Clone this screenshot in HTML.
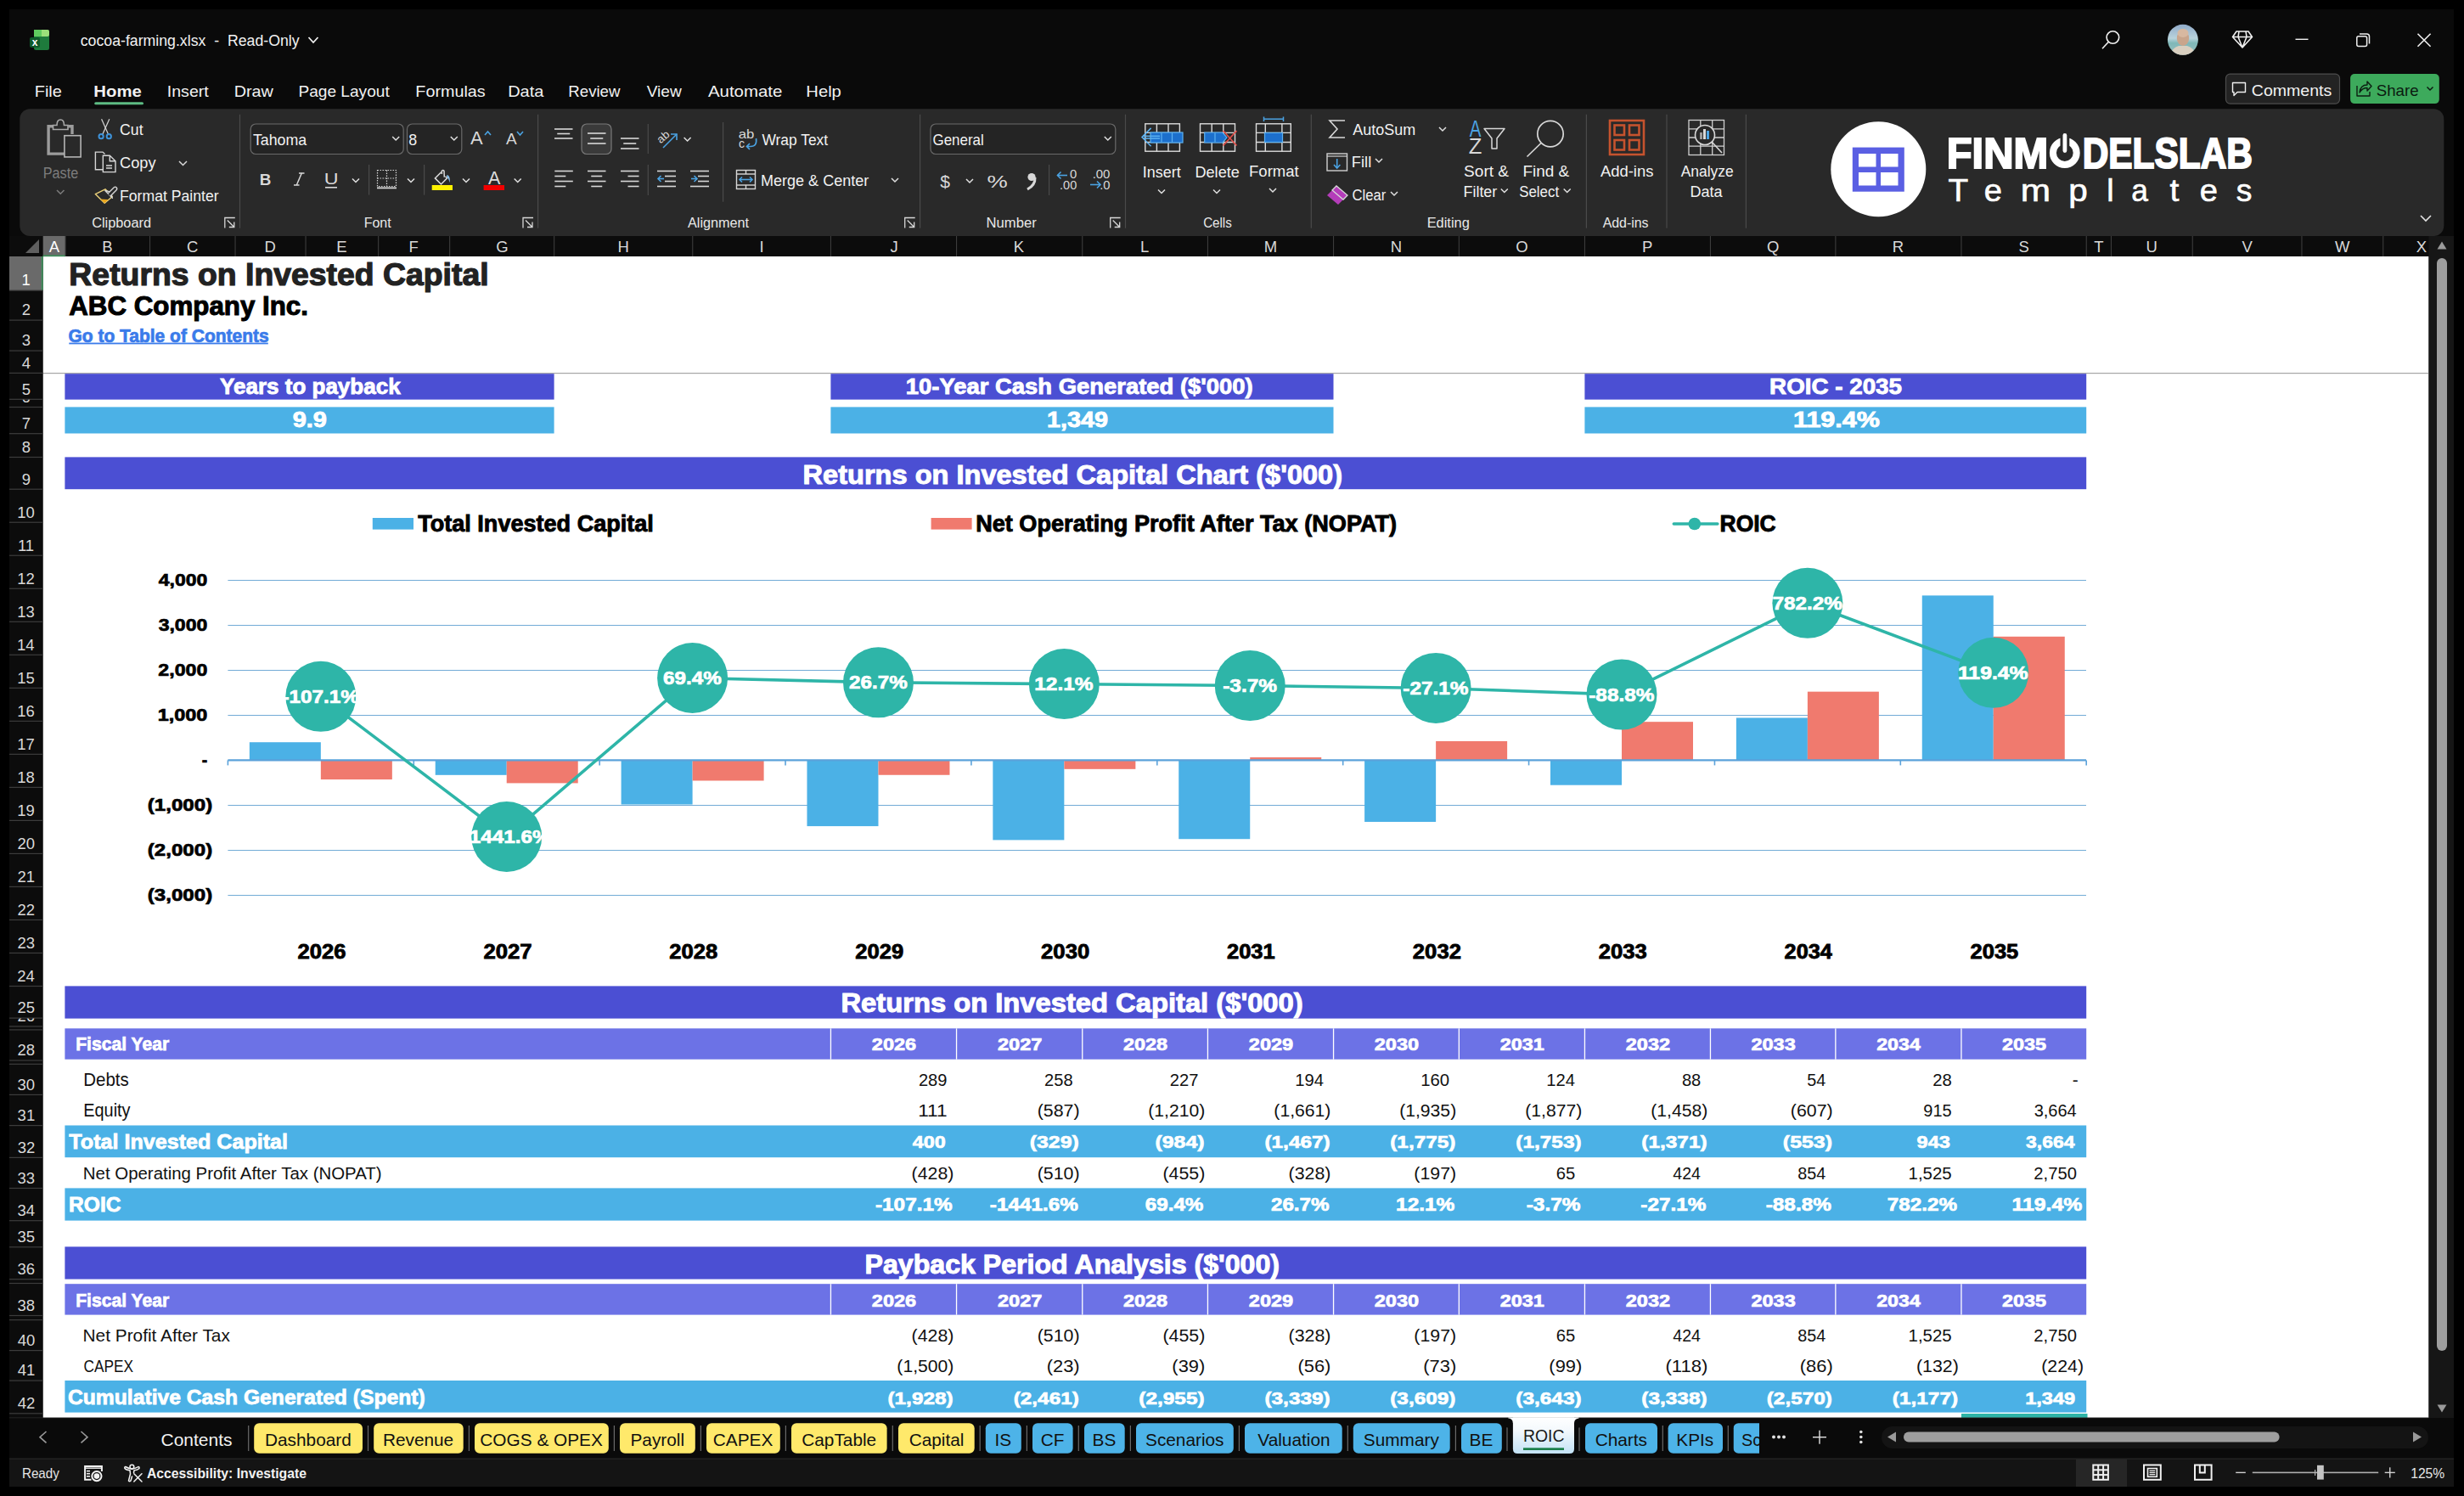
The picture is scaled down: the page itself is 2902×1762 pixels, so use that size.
<!DOCTYPE html>
<html><head><meta charset="utf-8"><title>cocoa-farming.xlsx</title>
<style>html,body{margin:0;padding:0;background:#000;overflow:hidden;width:2902px;height:1762px}svg{display:block}text{font-family:"Liberation Sans",sans-serif;white-space:pre}</style>
</head><body>
<svg width="2902" height="1762" viewBox="0 0 2902 1762" font-family="Liberation Sans">
<rect x="0.00" y="0.00" width="2902.00" height="1762.00" fill="#000"/>
<rect x="11.00" y="11.00" width="2879.00" height="1740.00" fill="#0A0A0A"/>
<rect x="50.50" y="302.00" width="2810.00" height="1368.00" fill="#fff"/>
<text x="81.38" y="335.80" font-size="36.5" font-weight="700" fill="#222222" textLength="494.24" lengthAdjust="spacingAndGlyphs" stroke="#222222" stroke-width="1.22">Returns on Invested Capital</text>
<text x="81.22" y="370.60" font-size="30.5" font-weight="700" fill="#000000" textLength="281.74" lengthAdjust="spacingAndGlyphs" stroke="#000000" stroke-width="1.02">ABC Company Inc.</text>
<text x="80.46" y="403.00" font-size="21.8" font-weight="700" fill="#3A7BEA" textLength="236.20" lengthAdjust="spacingAndGlyphs" stroke="#3A7BEA" stroke-width="0.73">Go to Table of Contents</text>
<rect x="81.30" y="403.60" width="234.50" height="1.80" fill="#3A7BEA"/>
<rect x="50.50" y="439.00" width="2810.00" height="1.20" fill="#A6A6A6"/>
<rect x="76.40" y="440.20" width="576.20" height="30.40" fill="#4B4FD3"/>
<text x="259.04" y="464.40" font-size="26" font-weight="700" fill="#fff" textLength="212.63" lengthAdjust="spacingAndGlyphs" stroke="#fff" stroke-width="0.87">Years to payback</text>
<rect x="76.40" y="479.40" width="576.20" height="31.10" fill="#4BB1E6"/>
<text x="344.68" y="503.40" font-size="25" font-weight="700" fill="#fff" textLength="40.34" lengthAdjust="spacingAndGlyphs" stroke="#fff" stroke-width="0.83">9.9</text>
<rect x="978.40" y="440.20" width="592.10" height="30.40" fill="#4B4FD3"/>
<text x="1066.89" y="464.40" font-size="26" font-weight="700" fill="#fff" textLength="408.79" lengthAdjust="spacingAndGlyphs" stroke="#fff" stroke-width="0.87">10-Year Cash Generated ($'000)</text>
<rect x="978.40" y="479.40" width="592.10" height="31.10" fill="#4BB1E6"/>
<text x="1233.00" y="503.40" font-size="25" font-weight="700" fill="#fff" textLength="72.01" lengthAdjust="spacingAndGlyphs" stroke="#fff" stroke-width="0.83">1,349</text>
<rect x="1866.40" y="440.20" width="590.80" height="30.40" fill="#4B4FD3"/>
<text x="2084.13" y="464.40" font-size="26" font-weight="700" fill="#fff" textLength="155.86" lengthAdjust="spacingAndGlyphs" stroke="#fff" stroke-width="0.87">ROIC - 2035</text>
<rect x="1866.40" y="479.40" width="590.80" height="31.10" fill="#4BB1E6"/>
<text x="2112.09" y="503.40" font-size="25" font-weight="700" fill="#fff" textLength="101.92" lengthAdjust="spacingAndGlyphs" stroke="#fff" stroke-width="0.83">119.4%</text>
<rect x="76.40" y="538.40" width="2380.80" height="37.80" fill="#4B4FD3"/>
<text x="945.60" y="570.00" font-size="31" font-weight="700" fill="#fff" textLength="635.45" lengthAdjust="spacingAndGlyphs" stroke="#fff" stroke-width="1.03">Returns on Invested Capital Chart ($'000)</text>
<line x1="268.40" y1="683.50" x2="2457.00" y2="683.50" stroke="#72ABD6" stroke-width="1.2"/>
<line x1="268.40" y1="736.50" x2="2457.00" y2="736.50" stroke="#72ABD6" stroke-width="1.2"/>
<line x1="268.40" y1="789.50" x2="2457.00" y2="789.50" stroke="#72ABD6" stroke-width="1.2"/>
<line x1="268.40" y1="842.50" x2="2457.00" y2="842.50" stroke="#72ABD6" stroke-width="1.2"/>
<line x1="268.40" y1="948.50" x2="2457.00" y2="948.50" stroke="#72ABD6" stroke-width="1.2"/>
<line x1="268.40" y1="1001.50" x2="2457.00" y2="1001.50" stroke="#72ABD6" stroke-width="1.2"/>
<line x1="268.40" y1="1054.50" x2="2457.00" y2="1054.50" stroke="#72ABD6" stroke-width="1.2"/>
<text x="186.84" y="690.00" font-size="20.604" font-weight="700" fill="#000" textLength="57.48" lengthAdjust="spacingAndGlyphs" stroke="#000" stroke-width="0.69">4,000</text>
<text x="186.67" y="742.95" font-size="20.604" font-weight="700" fill="#000" textLength="57.66" lengthAdjust="spacingAndGlyphs" stroke="#000" stroke-width="0.69">3,000</text>
<text x="186.37" y="795.90" font-size="20.604" font-weight="700" fill="#000" textLength="57.95" lengthAdjust="spacingAndGlyphs" stroke="#000" stroke-width="0.69">2,000</text>
<text x="185.72" y="848.85" font-size="20.604" font-weight="700" fill="#000" textLength="58.62" lengthAdjust="spacingAndGlyphs" stroke="#000" stroke-width="0.69">1,000</text>
<text x="237.70" y="901.80" font-size="19.5" font-weight="700" fill="#000" textLength="6.49" lengthAdjust="spacingAndGlyphs" stroke="#000" stroke-width="0.65">-</text>
<text x="173.80" y="954.75" font-size="20.604" font-weight="700" fill="#000" textLength="76.43" lengthAdjust="spacingAndGlyphs" stroke="#000" stroke-width="0.69">(1,000)</text>
<text x="173.80" y="1007.70" font-size="20.604" font-weight="700" fill="#000" textLength="76.43" lengthAdjust="spacingAndGlyphs" stroke="#000" stroke-width="0.69">(2,000)</text>
<text x="173.80" y="1060.65" font-size="20.604" font-weight="700" fill="#000" textLength="76.43" lengthAdjust="spacingAndGlyphs" stroke="#000" stroke-width="0.69">(3,000)</text>
<rect x="293.84" y="874.22" width="84.00" height="21.18" fill="#4BB1E6"/>
<rect x="377.84" y="895.40" width="84.00" height="22.66" fill="#F07A6E"/>
<rect x="512.72" y="895.40" width="84.00" height="17.42" fill="#4BB1E6"/>
<rect x="596.72" y="895.40" width="84.00" height="27.00" fill="#F07A6E"/>
<rect x="731.60" y="895.40" width="84.00" height="52.10" fill="#4BB1E6"/>
<rect x="815.60" y="895.40" width="84.00" height="24.09" fill="#F07A6E"/>
<rect x="950.48" y="895.40" width="84.00" height="77.68" fill="#4BB1E6"/>
<rect x="1034.48" y="895.40" width="84.00" height="17.37" fill="#F07A6E"/>
<rect x="1169.36" y="895.40" width="84.00" height="93.99" fill="#4BB1E6"/>
<rect x="1253.36" y="895.40" width="84.00" height="10.43" fill="#F07A6E"/>
<rect x="1388.24" y="895.40" width="84.00" height="92.82" fill="#4BB1E6"/>
<rect x="1472.24" y="891.96" width="84.00" height="3.44" fill="#F07A6E"/>
<rect x="1607.12" y="895.40" width="84.00" height="72.59" fill="#4BB1E6"/>
<rect x="1691.12" y="872.95" width="84.00" height="22.45" fill="#F07A6E"/>
<rect x="1826.00" y="895.40" width="84.00" height="29.28" fill="#4BB1E6"/>
<rect x="1910.00" y="850.18" width="84.00" height="45.22" fill="#F07A6E"/>
<rect x="2044.88" y="845.47" width="84.00" height="49.93" fill="#4BB1E6"/>
<rect x="2128.88" y="814.65" width="84.00" height="80.75" fill="#F07A6E"/>
<rect x="2263.76" y="701.39" width="84.00" height="194.01" fill="#4BB1E6"/>
<rect x="2347.76" y="749.79" width="84.00" height="145.61" fill="#F07A6E"/>
<line x1="268.40" y1="895.40" x2="2457.00" y2="895.40" stroke="#5BA2DA" stroke-width="2.2"/>
<line x1="268.40" y1="895.40" x2="268.40" y2="901.40" stroke="#5BA2DA" stroke-width="1.6"/>
<line x1="487.28" y1="895.40" x2="487.28" y2="901.40" stroke="#5BA2DA" stroke-width="1.6"/>
<line x1="706.16" y1="895.40" x2="706.16" y2="901.40" stroke="#5BA2DA" stroke-width="1.6"/>
<line x1="925.04" y1="895.40" x2="925.04" y2="901.40" stroke="#5BA2DA" stroke-width="1.6"/>
<line x1="1143.92" y1="895.40" x2="1143.92" y2="901.40" stroke="#5BA2DA" stroke-width="1.6"/>
<line x1="1362.80" y1="895.40" x2="1362.80" y2="901.40" stroke="#5BA2DA" stroke-width="1.6"/>
<line x1="1581.68" y1="895.40" x2="1581.68" y2="901.40" stroke="#5BA2DA" stroke-width="1.6"/>
<line x1="1800.56" y1="895.40" x2="1800.56" y2="901.40" stroke="#5BA2DA" stroke-width="1.6"/>
<line x1="2019.44" y1="895.40" x2="2019.44" y2="901.40" stroke="#5BA2DA" stroke-width="1.6"/>
<line x1="2238.32" y1="895.40" x2="2238.32" y2="901.40" stroke="#5BA2DA" stroke-width="1.6"/>
<line x1="2457.20" y1="895.40" x2="2457.20" y2="901.40" stroke="#5BA2DA" stroke-width="1.6"/>
<polyline points="377.84,820.35 596.72,985.51 815.60,798.51 1034.48,803.80 1253.36,805.60 1472.24,807.56 1691.12,810.45 1910.00,818.09 2128.88,710.29 2347.76,792.32" fill="none" stroke="#2EB5A8" stroke-width="3.6" stroke-linejoin="round"/>
<circle cx="377.84" cy="820.35" r="41.5" fill="#2EB5A8"/>
<circle cx="596.72" cy="985.51" r="41.5" fill="#2EB5A8"/>
<circle cx="815.60" cy="798.51" r="41.5" fill="#2EB5A8"/>
<circle cx="1034.48" cy="803.80" r="41.5" fill="#2EB5A8"/>
<circle cx="1253.36" cy="805.60" r="41.5" fill="#2EB5A8"/>
<circle cx="1472.24" cy="807.56" r="41.5" fill="#2EB5A8"/>
<circle cx="1691.12" cy="810.45" r="41.5" fill="#2EB5A8"/>
<circle cx="1910.00" cy="818.09" r="41.5" fill="#2EB5A8"/>
<circle cx="2128.88" cy="710.29" r="41.5" fill="#2EB5A8"/>
<circle cx="2347.76" cy="792.32" r="41.5" fill="#2EB5A8"/>
<text x="332.42" y="827.95" font-size="21.42" font-weight="700" fill="#fff" textLength="90.53" lengthAdjust="spacingAndGlyphs" stroke="#fff" stroke-width="0.71">-107.1%</text>
<text x="544.61" y="993.11" font-size="21.42" font-weight="700" fill="#fff" textLength="103.87" lengthAdjust="spacingAndGlyphs" stroke="#fff" stroke-width="0.71">-1441.6%</text>
<text x="781.13" y="806.11" font-size="21.42" font-weight="700" fill="#fff" textLength="68.64" lengthAdjust="spacingAndGlyphs" stroke="#fff" stroke-width="0.71">69.4%</text>
<text x="1000.08" y="811.40" font-size="21.42" font-weight="700" fill="#fff" textLength="68.58" lengthAdjust="spacingAndGlyphs" stroke="#fff" stroke-width="0.71">26.7%</text>
<text x="1218.28" y="813.20" font-size="21.42" font-weight="700" fill="#fff" textLength="69.27" lengthAdjust="spacingAndGlyphs" stroke="#fff" stroke-width="0.71">12.1%</text>
<text x="1440.19" y="815.16" font-size="21.42" font-weight="700" fill="#fff" textLength="63.78" lengthAdjust="spacingAndGlyphs" stroke="#fff" stroke-width="0.71">-3.7%</text>
<text x="1652.39" y="818.05" font-size="21.42" font-weight="700" fill="#fff" textLength="77.12" lengthAdjust="spacingAndGlyphs" stroke="#fff" stroke-width="0.71">-27.1%</text>
<text x="1871.27" y="825.69" font-size="21.42" font-weight="700" fill="#fff" textLength="77.12" lengthAdjust="spacingAndGlyphs" stroke="#fff" stroke-width="0.71">-88.8%</text>
<text x="2087.60" y="717.89" font-size="21.42" font-weight="700" fill="#fff" textLength="82.17" lengthAdjust="spacingAndGlyphs" stroke="#fff" stroke-width="0.71">782.2%</text>
<text x="2305.96" y="799.92" font-size="21.42" font-weight="700" fill="#fff" textLength="82.70" lengthAdjust="spacingAndGlyphs" stroke="#fff" stroke-width="0.71">119.4%</text>
<text x="350.58" y="1128.90" font-size="23.865" font-weight="700" fill="#000" textLength="56.97" lengthAdjust="spacingAndGlyphs" stroke="#000" stroke-width="0.80">2026</text>
<text x="569.46" y="1128.90" font-size="23.865" font-weight="700" fill="#000" textLength="57.17" lengthAdjust="spacingAndGlyphs" stroke="#000" stroke-width="0.80">2027</text>
<text x="788.34" y="1128.90" font-size="23.865" font-weight="700" fill="#000" textLength="56.84" lengthAdjust="spacingAndGlyphs" stroke="#000" stroke-width="0.80">2028</text>
<text x="1007.22" y="1128.90" font-size="23.865" font-weight="700" fill="#000" textLength="56.97" lengthAdjust="spacingAndGlyphs" stroke="#000" stroke-width="0.80">2029</text>
<text x="1226.10" y="1128.90" font-size="23.865" font-weight="700" fill="#000" textLength="57.10" lengthAdjust="spacingAndGlyphs" stroke="#000" stroke-width="0.80">2030</text>
<text x="1444.99" y="1128.90" font-size="23.865" font-weight="700" fill="#000" textLength="56.77" lengthAdjust="spacingAndGlyphs" stroke="#000" stroke-width="0.80">2031</text>
<text x="1663.86" y="1128.90" font-size="23.865" font-weight="700" fill="#000" textLength="57.04" lengthAdjust="spacingAndGlyphs" stroke="#000" stroke-width="0.80">2032</text>
<text x="1882.74" y="1128.90" font-size="23.865" font-weight="700" fill="#000" textLength="56.97" lengthAdjust="spacingAndGlyphs" stroke="#000" stroke-width="0.80">2033</text>
<text x="2101.63" y="1128.90" font-size="23.865" font-weight="700" fill="#000" textLength="56.19" lengthAdjust="spacingAndGlyphs" stroke="#000" stroke-width="0.80">2034</text>
<text x="2320.51" y="1128.90" font-size="23.865" font-weight="700" fill="#000" textLength="56.77" lengthAdjust="spacingAndGlyphs" stroke="#000" stroke-width="0.80">2035</text>
<rect x="438.80" y="610.00" width="48.20" height="13.60" fill="#4BB1E6"/>
<text x="492.23" y="625.80" font-size="27" font-weight="700" fill="#000" textLength="277.64" lengthAdjust="spacingAndGlyphs" stroke="#000" stroke-width="0.90">Total Invested Capital</text>
<rect x="1096.60" y="610.00" width="48.00" height="13.60" fill="#F07A6E"/>
<text x="1149.17" y="625.80" font-size="27" font-weight="700" fill="#000" textLength="495.98" lengthAdjust="spacingAndGlyphs" stroke="#000" stroke-width="0.90">Net Operating Profit After Tax (NOPAT)</text>
<line x1="1971.30" y1="617.00" x2="2022.80" y2="617.00" stroke="#2EB5A8" stroke-width="3.6" stroke-linecap="round"/>
<circle cx="1995.8" cy="617" r="7.3" fill="#2EB5A8"/>
<text x="2025.51" y="625.90" font-size="27" font-weight="700" fill="#000" textLength="66.22" lengthAdjust="spacingAndGlyphs" stroke="#000" stroke-width="0.90">ROIC</text>
<rect x="76.40" y="1161.40" width="2380.80" height="38.20" fill="#4B4FD3"/>
<text x="990.49" y="1191.70" font-size="30.5" font-weight="700" fill="#fff" textLength="544.19" lengthAdjust="spacingAndGlyphs" stroke="#fff" stroke-width="1.02">Returns on Invested Capital ($'000)</text>
<rect x="76.40" y="1211.30" width="2380.80" height="36.40" fill="#6C72E6"/>
<rect x="977.80" y="1211.30" width="1.30" height="36.40" fill="#ffffff"/>
<rect x="1125.90" y="1211.30" width="1.30" height="36.40" fill="#ffffff"/>
<rect x="1274.10" y="1211.30" width="1.30" height="36.40" fill="#ffffff"/>
<rect x="1421.80" y="1211.30" width="1.30" height="36.40" fill="#ffffff"/>
<rect x="1569.90" y="1211.30" width="1.30" height="36.40" fill="#ffffff"/>
<rect x="1717.70" y="1211.30" width="1.30" height="36.40" fill="#ffffff"/>
<rect x="1865.80" y="1211.30" width="1.30" height="36.40" fill="#ffffff"/>
<rect x="2013.80" y="1211.30" width="1.30" height="36.40" fill="#ffffff"/>
<rect x="2161.20" y="1211.30" width="1.30" height="36.40" fill="#ffffff"/>
<rect x="2309.30" y="1211.30" width="1.30" height="36.40" fill="#ffffff"/>
<text x="89.17" y="1237.00" font-size="22.5" font-weight="700" fill="#fff" textLength="110.11" lengthAdjust="spacingAndGlyphs" stroke="#fff" stroke-width="0.75">Fiscal Year</text>
<text x="1026.80" y="1237.00" font-size="20.808" font-weight="700" fill="#fff" textLength="52.35" lengthAdjust="spacingAndGlyphs" stroke="#fff" stroke-width="0.69">2026</text>
<text x="1174.95" y="1237.00" font-size="20.808" font-weight="700" fill="#fff" textLength="52.53" lengthAdjust="spacingAndGlyphs" stroke="#fff" stroke-width="0.69">2027</text>
<text x="1322.90" y="1237.00" font-size="20.808" font-weight="700" fill="#fff" textLength="52.23" lengthAdjust="spacingAndGlyphs" stroke="#fff" stroke-width="0.69">2028</text>
<text x="1470.80" y="1237.00" font-size="20.808" font-weight="700" fill="#fff" textLength="52.35" lengthAdjust="spacingAndGlyphs" stroke="#fff" stroke-width="0.69">2029</text>
<text x="1618.75" y="1237.00" font-size="20.808" font-weight="700" fill="#fff" textLength="52.47" lengthAdjust="spacingAndGlyphs" stroke="#fff" stroke-width="0.69">2030</text>
<text x="1766.70" y="1237.00" font-size="20.808" font-weight="700" fill="#fff" textLength="52.17" lengthAdjust="spacingAndGlyphs" stroke="#fff" stroke-width="0.69">2031</text>
<text x="1914.75" y="1237.00" font-size="20.808" font-weight="700" fill="#fff" textLength="52.41" lengthAdjust="spacingAndGlyphs" stroke="#fff" stroke-width="0.69">2032</text>
<text x="2062.45" y="1237.00" font-size="20.808" font-weight="700" fill="#fff" textLength="52.35" lengthAdjust="spacingAndGlyphs" stroke="#fff" stroke-width="0.69">2033</text>
<text x="2210.21" y="1237.00" font-size="20.808" font-weight="700" fill="#fff" textLength="51.63" lengthAdjust="spacingAndGlyphs" stroke="#fff" stroke-width="0.69">2034</text>
<text x="2357.90" y="1237.00" font-size="20.808" font-weight="700" fill="#fff" textLength="52.17" lengthAdjust="spacingAndGlyphs" stroke="#fff" stroke-width="0.69">2035</text>
<text x="98.21" y="1279.00" font-size="21.3" font-weight="400" fill="#111" textLength="53.50" lengthAdjust="spacingAndGlyphs">Debts</text>
<text x="1081.88" y="1279.00" font-size="20.502000000000002" font-weight="400" fill="#111" textLength="33.55" lengthAdjust="spacingAndGlyphs">289</text>
<text x="1230.08" y="1279.00" font-size="20.502000000000002" font-weight="400" fill="#111" textLength="33.49" lengthAdjust="spacingAndGlyphs">258</text>
<text x="1377.77" y="1279.00" font-size="20.502000000000002" font-weight="400" fill="#111" textLength="33.65" lengthAdjust="spacingAndGlyphs">227</text>
<text x="1525.37" y="1279.00" font-size="20.502000000000002" font-weight="400" fill="#111" textLength="33.71" lengthAdjust="spacingAndGlyphs">194</text>
<text x="1673.16" y="1279.00" font-size="20.502000000000002" font-weight="400" fill="#111" textLength="33.93" lengthAdjust="spacingAndGlyphs">160</text>
<text x="1821.27" y="1279.00" font-size="20.502000000000002" font-weight="400" fill="#111" textLength="33.71" lengthAdjust="spacingAndGlyphs">124</text>
<text x="1980.90" y="1279.00" font-size="20.502000000000002" font-weight="400" fill="#111" textLength="22.40" lengthAdjust="spacingAndGlyphs">88</text>
<text x="2128.37" y="1279.00" font-size="20.502000000000002" font-weight="400" fill="#111" textLength="22.03" lengthAdjust="spacingAndGlyphs">54</text>
<text x="2276.24" y="1279.00" font-size="20.502000000000002" font-weight="400" fill="#111" textLength="22.57" lengthAdjust="spacingAndGlyphs">28</text>
<text x="2440.71" y="1279.00" font-size="21" font-weight="400" fill="#111" textLength="6.99" lengthAdjust="spacingAndGlyphs">-</text>
<text x="98.26" y="1315.10" font-size="21.3" font-weight="400" fill="#111" textLength="55.28" lengthAdjust="spacingAndGlyphs">Equity</text>
<text x="1081.19" y="1315.10" font-size="20.502000000000002" font-weight="400" fill="#111" textLength="34.39" lengthAdjust="spacingAndGlyphs">111</text>
<text x="1221.75" y="1315.10" font-size="20.502000000000002" font-weight="400" fill="#111" textLength="49.82" lengthAdjust="spacingAndGlyphs">(587)</text>
<text x="1352.26" y="1315.10" font-size="20.502000000000002" font-weight="400" fill="#111" textLength="67.03" lengthAdjust="spacingAndGlyphs">(1,210)</text>
<text x="1500.36" y="1315.10" font-size="20.502000000000002" font-weight="400" fill="#111" textLength="67.03" lengthAdjust="spacingAndGlyphs">(1,661)</text>
<text x="1648.16" y="1315.10" font-size="20.502000000000002" font-weight="400" fill="#111" textLength="67.03" lengthAdjust="spacingAndGlyphs">(1,935)</text>
<text x="1796.26" y="1315.10" font-size="20.502000000000002" font-weight="400" fill="#111" textLength="67.03" lengthAdjust="spacingAndGlyphs">(1,877)</text>
<text x="1944.26" y="1315.10" font-size="20.502000000000002" font-weight="400" fill="#111" textLength="67.03" lengthAdjust="spacingAndGlyphs">(1,458)</text>
<text x="2108.85" y="1315.10" font-size="20.502000000000002" font-weight="400" fill="#111" textLength="49.82" lengthAdjust="spacingAndGlyphs">(607)</text>
<text x="2265.33" y="1315.10" font-size="20.502000000000002" font-weight="400" fill="#111" textLength="33.39" lengthAdjust="spacingAndGlyphs">915</text>
<text x="2395.63" y="1315.10" font-size="20.502000000000002" font-weight="400" fill="#111" textLength="50.13" lengthAdjust="spacingAndGlyphs">3,664</text>
<rect x="76.40" y="1325.50" width="2380.80" height="37.70" fill="#4BB1E6"/>
<text x="81.35" y="1352.80" font-size="24.1" font-weight="700" fill="#fff" textLength="257.69" lengthAdjust="spacingAndGlyphs" stroke="#fff" stroke-width="0.80">Total Invested Capital</text>
<text x="1074.69" y="1352.20" font-size="20.808" font-weight="700" fill="#fff" textLength="38.97" lengthAdjust="spacingAndGlyphs" stroke="#fff" stroke-width="0.69">400</text>
<text x="1212.75" y="1352.20" font-size="20.808" font-weight="700" fill="#fff" textLength="58.09" lengthAdjust="spacingAndGlyphs" stroke="#fff" stroke-width="0.69">(329)</text>
<text x="1360.45" y="1352.20" font-size="20.808" font-weight="700" fill="#fff" textLength="58.09" lengthAdjust="spacingAndGlyphs" stroke="#fff" stroke-width="0.69">(984)</text>
<text x="1489.46" y="1352.20" font-size="20.808" font-weight="700" fill="#fff" textLength="77.19" lengthAdjust="spacingAndGlyphs" stroke="#fff" stroke-width="0.69">(1,467)</text>
<text x="1637.26" y="1352.20" font-size="20.808" font-weight="700" fill="#fff" textLength="77.19" lengthAdjust="spacingAndGlyphs" stroke="#fff" stroke-width="0.69">(1,775)</text>
<text x="1785.36" y="1352.20" font-size="20.808" font-weight="700" fill="#fff" textLength="77.19" lengthAdjust="spacingAndGlyphs" stroke="#fff" stroke-width="0.69">(1,753)</text>
<text x="1933.36" y="1352.20" font-size="20.808" font-weight="700" fill="#fff" textLength="77.19" lengthAdjust="spacingAndGlyphs" stroke="#fff" stroke-width="0.69">(1,371)</text>
<text x="2099.85" y="1352.20" font-size="20.808" font-weight="700" fill="#fff" textLength="58.09" lengthAdjust="spacingAndGlyphs" stroke="#fff" stroke-width="0.69">(553)</text>
<text x="2257.62" y="1352.20" font-size="20.808" font-weight="700" fill="#fff" textLength="39.33" lengthAdjust="spacingAndGlyphs" stroke="#fff" stroke-width="0.69">943</text>
<text x="2386.11" y="1352.20" font-size="20.808" font-weight="700" fill="#fff" textLength="57.40" lengthAdjust="spacingAndGlyphs" stroke="#fff" stroke-width="0.69">3,664</text>
<text x="97.82" y="1388.60" font-size="20.5" font-weight="400" fill="#111" textLength="351.73" lengthAdjust="spacingAndGlyphs">Net Operating Profit After Tax (NOPAT)</text>
<text x="1073.55" y="1388.60" font-size="20.502000000000002" font-weight="400" fill="#111" textLength="49.82" lengthAdjust="spacingAndGlyphs">(428)</text>
<text x="1221.75" y="1388.60" font-size="20.502000000000002" font-weight="400" fill="#111" textLength="49.82" lengthAdjust="spacingAndGlyphs">(510)</text>
<text x="1369.45" y="1388.60" font-size="20.502000000000002" font-weight="400" fill="#111" textLength="49.82" lengthAdjust="spacingAndGlyphs">(455)</text>
<text x="1517.55" y="1388.60" font-size="20.502000000000002" font-weight="400" fill="#111" textLength="49.82" lengthAdjust="spacingAndGlyphs">(328)</text>
<text x="1665.35" y="1388.60" font-size="20.502000000000002" font-weight="400" fill="#111" textLength="49.82" lengthAdjust="spacingAndGlyphs">(197)</text>
<text x="1832.75" y="1388.60" font-size="20.502000000000002" font-weight="400" fill="#111" textLength="22.51" lengthAdjust="spacingAndGlyphs">65</text>
<text x="1970.34" y="1388.60" font-size="20.502000000000002" font-weight="400" fill="#111" textLength="32.61" lengthAdjust="spacingAndGlyphs">424</text>
<text x="2117.34" y="1388.60" font-size="20.502000000000002" font-weight="400" fill="#111" textLength="33.02" lengthAdjust="spacingAndGlyphs">854</text>
<text x="2247.54" y="1388.60" font-size="20.502000000000002" font-weight="400" fill="#111" textLength="51.18" lengthAdjust="spacingAndGlyphs">1,525</text>
<text x="2395.37" y="1388.60" font-size="20.502000000000002" font-weight="400" fill="#111" textLength="50.59" lengthAdjust="spacingAndGlyphs">2,750</text>
<rect x="76.40" y="1399.40" width="2380.80" height="38.20" fill="#4BB1E6"/>
<text x="81.14" y="1426.70" font-size="23.1" font-weight="700" fill="#fff" textLength="61.33" lengthAdjust="spacingAndGlyphs" stroke="#fff" stroke-width="0.77">ROIC</text>
<text x="1031.03" y="1426.00" font-size="21.42" font-weight="700" fill="#fff" textLength="90.53" lengthAdjust="spacingAndGlyphs" stroke="#fff" stroke-width="0.71">-107.1%</text>
<text x="1165.86" y="1426.00" font-size="21.42" font-weight="700" fill="#fff" textLength="103.87" lengthAdjust="spacingAndGlyphs" stroke="#fff" stroke-width="0.71">-1441.6%</text>
<text x="1348.78" y="1426.00" font-size="21.42" font-weight="700" fill="#fff" textLength="68.64" lengthAdjust="spacingAndGlyphs" stroke="#fff" stroke-width="0.71">69.4%</text>
<text x="1496.94" y="1426.00" font-size="21.42" font-weight="700" fill="#fff" textLength="68.58" lengthAdjust="spacingAndGlyphs" stroke="#fff" stroke-width="0.71">26.7%</text>
<text x="1644.06" y="1426.00" font-size="21.42" font-weight="700" fill="#fff" textLength="69.27" lengthAdjust="spacingAndGlyphs" stroke="#fff" stroke-width="0.71">12.1%</text>
<text x="1797.68" y="1426.00" font-size="21.42" font-weight="700" fill="#fff" textLength="63.78" lengthAdjust="spacingAndGlyphs" stroke="#fff" stroke-width="0.71">-3.7%</text>
<text x="1932.31" y="1426.00" font-size="21.42" font-weight="700" fill="#fff" textLength="77.12" lengthAdjust="spacingAndGlyphs" stroke="#fff" stroke-width="0.71">-27.1%</text>
<text x="2079.71" y="1426.00" font-size="21.42" font-weight="700" fill="#fff" textLength="77.12" lengthAdjust="spacingAndGlyphs" stroke="#fff" stroke-width="0.71">-88.8%</text>
<text x="2222.78" y="1426.00" font-size="21.42" font-weight="700" fill="#fff" textLength="82.17" lengthAdjust="spacingAndGlyphs" stroke="#fff" stroke-width="0.71">782.2%</text>
<text x="2369.56" y="1426.00" font-size="21.42" font-weight="700" fill="#fff" textLength="82.70" lengthAdjust="spacingAndGlyphs" stroke="#fff" stroke-width="0.71">119.4%</text>
<rect x="76.40" y="1468.40" width="2380.80" height="38.20" fill="#4B4FD3"/>
<text x="1018.53" y="1499.50" font-size="30.5" font-weight="700" fill="#fff" textLength="488.42" lengthAdjust="spacingAndGlyphs" stroke="#fff" stroke-width="1.02">Payback Period Analysis ($'000)</text>
<rect x="76.40" y="1512.20" width="2380.80" height="36.40" fill="#6C72E6"/>
<rect x="977.80" y="1512.20" width="1.30" height="36.40" fill="#ffffff"/>
<rect x="1125.90" y="1512.20" width="1.30" height="36.40" fill="#ffffff"/>
<rect x="1274.10" y="1512.20" width="1.30" height="36.40" fill="#ffffff"/>
<rect x="1421.80" y="1512.20" width="1.30" height="36.40" fill="#ffffff"/>
<rect x="1569.90" y="1512.20" width="1.30" height="36.40" fill="#ffffff"/>
<rect x="1717.70" y="1512.20" width="1.30" height="36.40" fill="#ffffff"/>
<rect x="1865.80" y="1512.20" width="1.30" height="36.40" fill="#ffffff"/>
<rect x="2013.80" y="1512.20" width="1.30" height="36.40" fill="#ffffff"/>
<rect x="2161.20" y="1512.20" width="1.30" height="36.40" fill="#ffffff"/>
<rect x="2309.30" y="1512.20" width="1.30" height="36.40" fill="#ffffff"/>
<text x="89.17" y="1538.50" font-size="22.5" font-weight="700" fill="#fff" textLength="110.11" lengthAdjust="spacingAndGlyphs" stroke="#fff" stroke-width="0.75">Fiscal Year</text>
<text x="1026.80" y="1538.50" font-size="20.808" font-weight="700" fill="#fff" textLength="52.35" lengthAdjust="spacingAndGlyphs" stroke="#fff" stroke-width="0.69">2026</text>
<text x="1174.95" y="1538.50" font-size="20.808" font-weight="700" fill="#fff" textLength="52.53" lengthAdjust="spacingAndGlyphs" stroke="#fff" stroke-width="0.69">2027</text>
<text x="1322.90" y="1538.50" font-size="20.808" font-weight="700" fill="#fff" textLength="52.23" lengthAdjust="spacingAndGlyphs" stroke="#fff" stroke-width="0.69">2028</text>
<text x="1470.80" y="1538.50" font-size="20.808" font-weight="700" fill="#fff" textLength="52.35" lengthAdjust="spacingAndGlyphs" stroke="#fff" stroke-width="0.69">2029</text>
<text x="1618.75" y="1538.50" font-size="20.808" font-weight="700" fill="#fff" textLength="52.47" lengthAdjust="spacingAndGlyphs" stroke="#fff" stroke-width="0.69">2030</text>
<text x="1766.70" y="1538.50" font-size="20.808" font-weight="700" fill="#fff" textLength="52.17" lengthAdjust="spacingAndGlyphs" stroke="#fff" stroke-width="0.69">2031</text>
<text x="1914.75" y="1538.50" font-size="20.808" font-weight="700" fill="#fff" textLength="52.41" lengthAdjust="spacingAndGlyphs" stroke="#fff" stroke-width="0.69">2032</text>
<text x="2062.45" y="1538.50" font-size="20.808" font-weight="700" fill="#fff" textLength="52.35" lengthAdjust="spacingAndGlyphs" stroke="#fff" stroke-width="0.69">2033</text>
<text x="2210.21" y="1538.50" font-size="20.808" font-weight="700" fill="#fff" textLength="51.63" lengthAdjust="spacingAndGlyphs" stroke="#fff" stroke-width="0.69">2034</text>
<text x="2357.90" y="1538.50" font-size="20.808" font-weight="700" fill="#fff" textLength="52.17" lengthAdjust="spacingAndGlyphs" stroke="#fff" stroke-width="0.69">2035</text>
<text x="97.58" y="1579.80" font-size="21" font-weight="400" fill="#111" textLength="173.30" lengthAdjust="spacingAndGlyphs">Net Profit After Tax</text>
<text x="1073.55" y="1579.80" font-size="20.502000000000002" font-weight="400" fill="#111" textLength="49.82" lengthAdjust="spacingAndGlyphs">(428)</text>
<text x="1221.75" y="1579.80" font-size="20.502000000000002" font-weight="400" fill="#111" textLength="49.82" lengthAdjust="spacingAndGlyphs">(510)</text>
<text x="1369.45" y="1579.80" font-size="20.502000000000002" font-weight="400" fill="#111" textLength="49.82" lengthAdjust="spacingAndGlyphs">(455)</text>
<text x="1517.55" y="1579.80" font-size="20.502000000000002" font-weight="400" fill="#111" textLength="49.82" lengthAdjust="spacingAndGlyphs">(328)</text>
<text x="1665.35" y="1579.80" font-size="20.502000000000002" font-weight="400" fill="#111" textLength="49.82" lengthAdjust="spacingAndGlyphs">(197)</text>
<text x="1832.75" y="1579.80" font-size="20.502000000000002" font-weight="400" fill="#111" textLength="22.51" lengthAdjust="spacingAndGlyphs">65</text>
<text x="1970.34" y="1579.80" font-size="20.502000000000002" font-weight="400" fill="#111" textLength="32.61" lengthAdjust="spacingAndGlyphs">424</text>
<text x="2117.34" y="1579.80" font-size="20.502000000000002" font-weight="400" fill="#111" textLength="33.02" lengthAdjust="spacingAndGlyphs">854</text>
<text x="2247.54" y="1579.80" font-size="20.502000000000002" font-weight="400" fill="#111" textLength="51.18" lengthAdjust="spacingAndGlyphs">1,525</text>
<text x="2395.37" y="1579.80" font-size="20.502000000000002" font-weight="400" fill="#111" textLength="50.59" lengthAdjust="spacingAndGlyphs">2,750</text>
<text x="98.44" y="1615.70" font-size="21" font-weight="400" fill="#111" textLength="58.45" lengthAdjust="spacingAndGlyphs">CAPEX</text>
<text x="1056.36" y="1615.70" font-size="20.502000000000002" font-weight="400" fill="#111" textLength="67.03" lengthAdjust="spacingAndGlyphs">(1,500)</text>
<text x="1232.69" y="1615.70" font-size="20.502000000000002" font-weight="400" fill="#111" textLength="38.94" lengthAdjust="spacingAndGlyphs">(23)</text>
<text x="1380.39" y="1615.70" font-size="20.502000000000002" font-weight="400" fill="#111" textLength="38.94" lengthAdjust="spacingAndGlyphs">(39)</text>
<text x="1528.49" y="1615.70" font-size="20.502000000000002" font-weight="400" fill="#111" textLength="38.94" lengthAdjust="spacingAndGlyphs">(56)</text>
<text x="1676.29" y="1615.70" font-size="20.502000000000002" font-weight="400" fill="#111" textLength="38.94" lengthAdjust="spacingAndGlyphs">(73)</text>
<text x="1824.39" y="1615.70" font-size="20.502000000000002" font-weight="400" fill="#111" textLength="38.94" lengthAdjust="spacingAndGlyphs">(99)</text>
<text x="1961.40" y="1615.70" font-size="20.502000000000002" font-weight="400" fill="#111" textLength="49.93" lengthAdjust="spacingAndGlyphs">(118)</text>
<text x="2119.79" y="1615.70" font-size="20.502000000000002" font-weight="400" fill="#111" textLength="38.94" lengthAdjust="spacingAndGlyphs">(86)</text>
<text x="2256.95" y="1615.70" font-size="20.502000000000002" font-weight="400" fill="#111" textLength="49.82" lengthAdjust="spacingAndGlyphs">(132)</text>
<text x="2404.25" y="1615.70" font-size="20.502000000000002" font-weight="400" fill="#111" textLength="49.82" lengthAdjust="spacingAndGlyphs">(224)</text>
<rect x="76.40" y="1626.00" width="2380.80" height="37.60" fill="#4BB1E6"/>
<text x="80.01" y="1654.00" font-size="24.1" font-weight="700" fill="#fff" textLength="420.71" lengthAdjust="spacingAndGlyphs" stroke="#fff" stroke-width="0.80">Cumulative Cash Generated (Spent)</text>
<text x="1045.46" y="1653.50" font-size="20.808" font-weight="700" fill="#fff" textLength="77.19" lengthAdjust="spacingAndGlyphs" stroke="#fff" stroke-width="0.69">(1,928)</text>
<text x="1193.66" y="1653.50" font-size="20.808" font-weight="700" fill="#fff" textLength="77.19" lengthAdjust="spacingAndGlyphs" stroke="#fff" stroke-width="0.69">(2,461)</text>
<text x="1341.36" y="1653.50" font-size="20.808" font-weight="700" fill="#fff" textLength="77.19" lengthAdjust="spacingAndGlyphs" stroke="#fff" stroke-width="0.69">(2,955)</text>
<text x="1489.46" y="1653.50" font-size="20.808" font-weight="700" fill="#fff" textLength="77.19" lengthAdjust="spacingAndGlyphs" stroke="#fff" stroke-width="0.69">(3,339)</text>
<text x="1637.26" y="1653.50" font-size="20.808" font-weight="700" fill="#fff" textLength="77.19" lengthAdjust="spacingAndGlyphs" stroke="#fff" stroke-width="0.69">(3,609)</text>
<text x="1785.36" y="1653.50" font-size="20.808" font-weight="700" fill="#fff" textLength="77.19" lengthAdjust="spacingAndGlyphs" stroke="#fff" stroke-width="0.69">(3,643)</text>
<text x="1933.36" y="1653.50" font-size="20.808" font-weight="700" fill="#fff" textLength="77.19" lengthAdjust="spacingAndGlyphs" stroke="#fff" stroke-width="0.69">(3,338)</text>
<text x="2080.76" y="1653.50" font-size="20.808" font-weight="700" fill="#fff" textLength="77.19" lengthAdjust="spacingAndGlyphs" stroke="#fff" stroke-width="0.69">(2,570)</text>
<text x="2228.86" y="1653.50" font-size="20.808" font-weight="700" fill="#fff" textLength="77.19" lengthAdjust="spacingAndGlyphs" stroke="#fff" stroke-width="0.69">(1,177)</text>
<text x="2385.15" y="1653.50" font-size="20.808" font-weight="700" fill="#fff" textLength="59.08" lengthAdjust="spacingAndGlyphs" stroke="#fff" stroke-width="0.69">1,349</text>
<rect x="2310.00" y="1665.00" width="148.50" height="5.00" fill="#2EB5A8"/>
<rect x="11.00" y="278.00" width="2849.50" height="24.00" fill="#0C0C0C"/>
<polygon points="46,282 46,298 30,298" fill="#5f5f5f"/>
<rect x="50.70" y="278.00" width="26.30" height="24.00" fill="#6A6A6A"/>
<rect x="50.70" y="300.40" width="26.30" height="1.80" fill="#3E8E5A"/>
<clipPath id="hdrclip"><rect x="11" y="278" width="2849.5" height="24"/></clipPath><g clip-path="url(#hdrclip)">
<text x="57.68" y="297.20" font-size="18.5" font-weight="400" fill="#FFFFFF" textLength="12.34" lengthAdjust="spacingAndGlyphs">A</text>
<rect x="76.50" y="278.00" width="1.10" height="24.00" fill="#3C3C3C"/>
<text x="120.30" y="297.20" font-size="18.5" font-weight="400" fill="#D9D9D9" textLength="12.34" lengthAdjust="spacingAndGlyphs">B</text>
<rect x="176.00" y="278.00" width="1.10" height="24.00" fill="#3C3C3C"/>
<text x="219.95" y="297.20" font-size="18.5" font-weight="400" fill="#D9D9D9" textLength="13.36" lengthAdjust="spacingAndGlyphs">C</text>
<rect x="276.50" y="278.00" width="1.10" height="24.00" fill="#3C3C3C"/>
<text x="311.49" y="297.20" font-size="18.5" font-weight="400" fill="#D9D9D9" textLength="13.36" lengthAdjust="spacingAndGlyphs">D</text>
<rect x="359.50" y="278.00" width="1.10" height="24.00" fill="#3C3C3C"/>
<text x="396.26" y="297.20" font-size="18.5" font-weight="400" fill="#D9D9D9" textLength="12.34" lengthAdjust="spacingAndGlyphs">E</text>
<rect x="445.10" y="278.00" width="1.10" height="24.00" fill="#3C3C3C"/>
<text x="481.56" y="297.20" font-size="18.5" font-weight="400" fill="#D9D9D9" textLength="11.30" lengthAdjust="spacingAndGlyphs">F</text>
<rect x="529.10" y="278.00" width="1.10" height="24.00" fill="#3C3C3C"/>
<text x="584.14" y="297.20" font-size="18.5" font-weight="400" fill="#D9D9D9" textLength="14.39" lengthAdjust="spacingAndGlyphs">G</text>
<rect x="652.10" y="278.00" width="1.10" height="24.00" fill="#3C3C3C"/>
<text x="727.47" y="297.20" font-size="18.5" font-weight="400" fill="#D9D9D9" textLength="13.36" lengthAdjust="spacingAndGlyphs">H</text>
<rect x="815.20" y="278.00" width="1.10" height="24.00" fill="#3C3C3C"/>
<text x="894.48" y="297.20" font-size="18.5" font-weight="400" fill="#D9D9D9" textLength="5.14" lengthAdjust="spacingAndGlyphs">I</text>
<rect x="977.90" y="278.00" width="1.10" height="24.00" fill="#3C3C3C"/>
<text x="1048.38" y="297.20" font-size="18.5" font-weight="400" fill="#D9D9D9" textLength="9.25" lengthAdjust="spacingAndGlyphs">J</text>
<rect x="1126.00" y="278.00" width="1.10" height="24.00" fill="#3C3C3C"/>
<text x="1193.78" y="297.20" font-size="18.5" font-weight="400" fill="#D9D9D9" textLength="12.34" lengthAdjust="spacingAndGlyphs">K</text>
<rect x="1274.20" y="278.00" width="1.10" height="24.00" fill="#3C3C3C"/>
<text x="1342.95" y="297.20" font-size="18.5" font-weight="400" fill="#D9D9D9" textLength="10.29" lengthAdjust="spacingAndGlyphs">L</text>
<rect x="1421.90" y="278.00" width="1.10" height="24.00" fill="#3C3C3C"/>
<text x="1488.75" y="297.20" font-size="18.5" font-weight="400" fill="#D9D9D9" textLength="15.41" lengthAdjust="spacingAndGlyphs">M</text>
<rect x="1570.00" y="278.00" width="1.10" height="24.00" fill="#3C3C3C"/>
<text x="1637.72" y="297.20" font-size="18.5" font-weight="400" fill="#D9D9D9" textLength="13.36" lengthAdjust="spacingAndGlyphs">N</text>
<rect x="1717.80" y="278.00" width="1.10" height="24.00" fill="#3C3C3C"/>
<text x="1785.16" y="297.20" font-size="18.5" font-weight="400" fill="#D9D9D9" textLength="14.39" lengthAdjust="spacingAndGlyphs">O</text>
<rect x="1865.90" y="278.00" width="1.10" height="24.00" fill="#3C3C3C"/>
<text x="1933.95" y="297.20" font-size="18.5" font-weight="400" fill="#D9D9D9" textLength="12.34" lengthAdjust="spacingAndGlyphs">P</text>
<rect x="2013.90" y="278.00" width="1.10" height="24.00" fill="#3C3C3C"/>
<text x="2080.91" y="297.20" font-size="18.5" font-weight="400" fill="#D9D9D9" textLength="14.39" lengthAdjust="spacingAndGlyphs">Q</text>
<rect x="2161.30" y="278.00" width="1.10" height="24.00" fill="#3C3C3C"/>
<text x="2228.84" y="297.20" font-size="18.5" font-weight="400" fill="#D9D9D9" textLength="13.36" lengthAdjust="spacingAndGlyphs">R</text>
<rect x="2309.40" y="278.00" width="1.10" height="24.00" fill="#3C3C3C"/>
<text x="2377.38" y="297.20" font-size="18.5" font-weight="400" fill="#D9D9D9" textLength="12.34" lengthAdjust="spacingAndGlyphs">S</text>
<rect x="2456.70" y="278.00" width="1.10" height="24.00" fill="#3C3C3C"/>
<text x="2466.16" y="297.20" font-size="18.5" font-weight="400" fill="#D9D9D9" textLength="11.30" lengthAdjust="spacingAndGlyphs">T</text>
<rect x="2485.90" y="278.00" width="1.10" height="24.00" fill="#3C3C3C"/>
<text x="2527.62" y="297.20" font-size="18.5" font-weight="400" fill="#D9D9D9" textLength="13.36" lengthAdjust="spacingAndGlyphs">U</text>
<rect x="2581.70" y="278.00" width="1.10" height="24.00" fill="#3C3C3C"/>
<text x="2640.38" y="297.20" font-size="18.5" font-weight="400" fill="#D9D9D9" textLength="12.34" lengthAdjust="spacingAndGlyphs">V</text>
<rect x="2710.40" y="278.00" width="1.10" height="24.00" fill="#3C3C3C"/>
<text x="2750.06" y="297.20" font-size="18.5" font-weight="400" fill="#D9D9D9" textLength="17.46" lengthAdjust="spacingAndGlyphs">W</text>
<rect x="2806.20" y="278.00" width="1.10" height="24.00" fill="#3C3C3C"/>
<text x="2845.68" y="297.20" font-size="18.5" font-weight="400" fill="#D9D9D9" textLength="12.34" lengthAdjust="spacingAndGlyphs">X</text>
</g>
<rect x="11.00" y="302.00" width="39.50" height="1368.00" fill="#0C0C0C"/>
<rect x="11.00" y="302.00" width="39.50" height="40.00" fill="#6A6A6A"/>
<rect x="48.70" y="302.00" width="2.00" height="40.00" fill="#3E8E5A"/>
<clipPath id="rowclip"><rect x="11" y="302" width="40" height="1368"/></clipPath>
<g clip-path="url(#rowclip)">
<clipPath id="rc1"><rect x="11" y="302.60" width="40" height="39.40"/></clipPath>
<g clip-path="url(#rc1)">
<text x="25.41" y="336.40" font-size="18.5" font-weight="400" fill="#FFFFFF" textLength="10.29" lengthAdjust="spacingAndGlyphs">1</text>
</g>
<rect x="11.00" y="341.50" width="39.50" height="1.20" fill="#3C3C3C"/>
<clipPath id="rc2"><rect x="11" y="342.60" width="40" height="34.40"/></clipPath>
<g clip-path="url(#rc2)">
<text x="25.67" y="371.40" font-size="18.5" font-weight="400" fill="#D9D9D9" textLength="10.29" lengthAdjust="spacingAndGlyphs">2</text>
</g>
<rect x="11.00" y="376.50" width="39.50" height="1.20" fill="#3C3C3C"/>
<clipPath id="rc3"><rect x="11" y="377.60" width="40" height="35.40"/></clipPath>
<g clip-path="url(#rc3)">
<text x="25.71" y="407.40" font-size="18.5" font-weight="400" fill="#D9D9D9" textLength="10.29" lengthAdjust="spacingAndGlyphs">3</text>
</g>
<rect x="11.00" y="412.50" width="39.50" height="1.20" fill="#3C3C3C"/>
<clipPath id="rc4"><rect x="11" y="413.60" width="40" height="25.70"/></clipPath>
<g clip-path="url(#rc4)">
<text x="25.71" y="433.70" font-size="18.5" font-weight="400" fill="#D9D9D9" textLength="10.29" lengthAdjust="spacingAndGlyphs">4</text>
</g>
<rect x="11.00" y="438.80" width="39.50" height="1.20" fill="#3C3C3C"/>
<clipPath id="rc5"><rect x="11" y="439.90" width="40" height="30.30"/></clipPath>
<g clip-path="url(#rc5)">
<text x="25.67" y="464.60" font-size="18.5" font-weight="400" fill="#D9D9D9" textLength="10.29" lengthAdjust="spacingAndGlyphs">5</text>
</g>
<rect x="11.00" y="469.70" width="39.50" height="1.20" fill="#3C3C3C"/>
<clipPath id="rc6"><rect x="11" y="470.80" width="40" height="8.60"/></clipPath>
<g clip-path="url(#rc6)">
<text x="25.60" y="473.80" font-size="18.5" font-weight="400" fill="#D9D9D9" textLength="10.29" lengthAdjust="spacingAndGlyphs">6</text>
</g>
<rect x="11.00" y="478.90" width="39.50" height="1.20" fill="#3C3C3C"/>
<clipPath id="rc7"><rect x="11" y="480.00" width="40" height="30.60"/></clipPath>
<g clip-path="url(#rc7)">
<text x="25.67" y="505.00" font-size="18.5" font-weight="400" fill="#D9D9D9" textLength="10.29" lengthAdjust="spacingAndGlyphs">7</text>
</g>
<rect x="11.00" y="510.10" width="39.50" height="1.20" fill="#3C3C3C"/>
<clipPath id="rc8"><rect x="11" y="511.20" width="40" height="27.20"/></clipPath>
<g clip-path="url(#rc8)">
<text x="25.67" y="532.80" font-size="18.5" font-weight="400" fill="#D9D9D9" textLength="10.29" lengthAdjust="spacingAndGlyphs">8</text>
</g>
<rect x="11.00" y="537.90" width="39.50" height="1.20" fill="#3C3C3C"/>
<clipPath id="rc9"><rect x="11" y="539.00" width="40" height="37.10"/></clipPath>
<g clip-path="url(#rc9)">
<text x="25.64" y="570.50" font-size="18.5" font-weight="400" fill="#D9D9D9" textLength="10.29" lengthAdjust="spacingAndGlyphs">9</text>
</g>
<rect x="11.00" y="575.60" width="39.50" height="1.20" fill="#3C3C3C"/>
<clipPath id="rc10"><rect x="11" y="576.70" width="40" height="38.42"/></clipPath>
<g clip-path="url(#rc10)">
<text x="20.19" y="609.52" font-size="18.5" font-weight="400" fill="#D9D9D9" textLength="20.58" lengthAdjust="spacingAndGlyphs">10</text>
</g>
<rect x="11.00" y="614.62" width="39.50" height="1.20" fill="#3C3C3C"/>
<clipPath id="rc11"><rect x="11" y="615.72" width="40" height="38.42"/></clipPath>
<g clip-path="url(#rc11)">
<text x="20.95" y="648.54" font-size="18.5" font-weight="400" fill="#D9D9D9" textLength="19.21" lengthAdjust="spacingAndGlyphs">11</text>
</g>
<rect x="11.00" y="653.64" width="39.50" height="1.20" fill="#3C3C3C"/>
<clipPath id="rc12"><rect x="11" y="654.74" width="40" height="38.42"/></clipPath>
<g clip-path="url(#rc12)">
<text x="20.30" y="687.56" font-size="18.5" font-weight="400" fill="#D9D9D9" textLength="20.58" lengthAdjust="spacingAndGlyphs">12</text>
</g>
<rect x="11.00" y="692.66" width="39.50" height="1.20" fill="#3C3C3C"/>
<clipPath id="rc13"><rect x="11" y="693.76" width="40" height="38.42"/></clipPath>
<g clip-path="url(#rc13)">
<text x="20.23" y="726.58" font-size="18.5" font-weight="400" fill="#D9D9D9" textLength="20.58" lengthAdjust="spacingAndGlyphs">13</text>
</g>
<rect x="11.00" y="731.68" width="39.50" height="1.20" fill="#3C3C3C"/>
<clipPath id="rc14"><rect x="11" y="732.78" width="40" height="38.42"/></clipPath>
<g clip-path="url(#rc14)">
<text x="20.09" y="765.60" font-size="18.5" font-weight="400" fill="#D9D9D9" textLength="20.58" lengthAdjust="spacingAndGlyphs">14</text>
</g>
<rect x="11.00" y="770.70" width="39.50" height="1.20" fill="#3C3C3C"/>
<clipPath id="rc15"><rect x="11" y="771.80" width="40" height="38.42"/></clipPath>
<g clip-path="url(#rc15)">
<text x="20.21" y="804.62" font-size="18.5" font-weight="400" fill="#D9D9D9" textLength="20.58" lengthAdjust="spacingAndGlyphs">15</text>
</g>
<rect x="11.00" y="809.72" width="39.50" height="1.20" fill="#3C3C3C"/>
<clipPath id="rc16"><rect x="11" y="810.82" width="40" height="38.42"/></clipPath>
<g clip-path="url(#rc16)">
<text x="20.23" y="843.64" font-size="18.5" font-weight="400" fill="#D9D9D9" textLength="20.58" lengthAdjust="spacingAndGlyphs">16</text>
</g>
<rect x="11.00" y="848.74" width="39.50" height="1.20" fill="#3C3C3C"/>
<clipPath id="rc17"><rect x="11" y="849.84" width="40" height="38.42"/></clipPath>
<g clip-path="url(#rc17)">
<text x="20.30" y="882.66" font-size="18.5" font-weight="400" fill="#D9D9D9" textLength="20.58" lengthAdjust="spacingAndGlyphs">17</text>
</g>
<rect x="11.00" y="887.76" width="39.50" height="1.20" fill="#3C3C3C"/>
<clipPath id="rc18"><rect x="11" y="888.86" width="40" height="38.42"/></clipPath>
<g clip-path="url(#rc18)">
<text x="20.23" y="921.68" font-size="18.5" font-weight="400" fill="#D9D9D9" textLength="20.58" lengthAdjust="spacingAndGlyphs">18</text>
</g>
<rect x="11.00" y="926.78" width="39.50" height="1.20" fill="#3C3C3C"/>
<clipPath id="rc19"><rect x="11" y="927.88" width="40" height="38.42"/></clipPath>
<g clip-path="url(#rc19)">
<text x="20.26" y="960.70" font-size="18.5" font-weight="400" fill="#D9D9D9" textLength="20.58" lengthAdjust="spacingAndGlyphs">19</text>
</g>
<rect x="11.00" y="965.80" width="39.50" height="1.20" fill="#3C3C3C"/>
<clipPath id="rc20"><rect x="11" y="966.90" width="40" height="38.42"/></clipPath>
<g clip-path="url(#rc20)">
<text x="20.42" y="999.72" font-size="18.5" font-weight="400" fill="#D9D9D9" textLength="20.58" lengthAdjust="spacingAndGlyphs">20</text>
</g>
<rect x="11.00" y="1004.82" width="39.50" height="1.20" fill="#3C3C3C"/>
<clipPath id="rc21"><rect x="11" y="1005.92" width="40" height="38.42"/></clipPath>
<g clip-path="url(#rc21)">
<text x="20.51" y="1038.74" font-size="18.5" font-weight="400" fill="#D9D9D9" textLength="20.58" lengthAdjust="spacingAndGlyphs">21</text>
</g>
<rect x="11.00" y="1043.84" width="39.50" height="1.20" fill="#3C3C3C"/>
<clipPath id="rc22"><rect x="11" y="1044.94" width="40" height="38.42"/></clipPath>
<g clip-path="url(#rc22)">
<text x="20.53" y="1077.76" font-size="18.5" font-weight="400" fill="#D9D9D9" textLength="20.58" lengthAdjust="spacingAndGlyphs">22</text>
</g>
<rect x="11.00" y="1082.86" width="39.50" height="1.20" fill="#3C3C3C"/>
<clipPath id="rc23"><rect x="11" y="1083.96" width="40" height="38.42"/></clipPath>
<g clip-path="url(#rc23)">
<text x="20.46" y="1116.78" font-size="18.5" font-weight="400" fill="#D9D9D9" textLength="20.58" lengthAdjust="spacingAndGlyphs">23</text>
</g>
<rect x="11.00" y="1121.88" width="39.50" height="1.20" fill="#3C3C3C"/>
<clipPath id="rc24"><rect x="11" y="1122.98" width="40" height="38.42"/></clipPath>
<g clip-path="url(#rc24)">
<text x="20.32" y="1155.80" font-size="18.5" font-weight="400" fill="#D9D9D9" textLength="20.58" lengthAdjust="spacingAndGlyphs">24</text>
</g>
<rect x="11.00" y="1160.90" width="39.50" height="1.20" fill="#3C3C3C"/>
<clipPath id="rc25"><rect x="11" y="1162.00" width="40" height="37.00"/></clipPath>
<g clip-path="url(#rc25)">
<text x="20.44" y="1193.40" font-size="18.5" font-weight="400" fill="#D9D9D9" textLength="20.58" lengthAdjust="spacingAndGlyphs">25</text>
</g>
<rect x="11.00" y="1198.50" width="39.50" height="1.20" fill="#3C3C3C"/>
<clipPath id="rc26"><rect x="11" y="1199.60" width="40" height="9.20"/></clipPath>
<g clip-path="url(#rc26)">
<text x="20.46" y="1203.20" font-size="18.5" font-weight="400" fill="#D9D9D9" textLength="20.58" lengthAdjust="spacingAndGlyphs">26</text>
</g>
<rect x="11.00" y="1208.30" width="39.50" height="1.20" fill="#3C3C3C"/>
<rect x="11.00" y="1212.30" width="39.50" height="1.20" fill="#3C3C3C"/>
<clipPath id="rc28"><rect x="11" y="1213.40" width="40" height="35.50"/></clipPath>
<g clip-path="url(#rc28)">
<text x="20.46" y="1243.30" font-size="18.5" font-weight="400" fill="#D9D9D9" textLength="20.58" lengthAdjust="spacingAndGlyphs">28</text>
</g>
<rect x="11.00" y="1248.40" width="39.50" height="1.20" fill="#3C3C3C"/>
<rect x="11.00" y="1252.70" width="39.50" height="1.20" fill="#3C3C3C"/>
<clipPath id="rc30"><rect x="11" y="1253.80" width="40" height="35.50"/></clipPath>
<g clip-path="url(#rc30)">
<text x="20.53" y="1283.70" font-size="18.5" font-weight="400" fill="#D9D9D9" textLength="20.58" lengthAdjust="spacingAndGlyphs">30</text>
</g>
<rect x="11.00" y="1288.80" width="39.50" height="1.20" fill="#3C3C3C"/>
<clipPath id="rc31"><rect x="11" y="1289.90" width="40" height="35.60"/></clipPath>
<g clip-path="url(#rc31)">
<text x="20.62" y="1319.90" font-size="18.5" font-weight="400" fill="#D9D9D9" textLength="20.58" lengthAdjust="spacingAndGlyphs">31</text>
</g>
<rect x="11.00" y="1325.00" width="39.50" height="1.20" fill="#3C3C3C"/>
<clipPath id="rc32"><rect x="11" y="1326.10" width="40" height="37.20"/></clipPath>
<g clip-path="url(#rc32)">
<text x="20.65" y="1357.70" font-size="18.5" font-weight="400" fill="#D9D9D9" textLength="20.58" lengthAdjust="spacingAndGlyphs">32</text>
</g>
<rect x="11.00" y="1362.80" width="39.50" height="1.20" fill="#3C3C3C"/>
<clipPath id="rc33"><rect x="11" y="1363.90" width="40" height="35.50"/></clipPath>
<g clip-path="url(#rc33)">
<text x="20.58" y="1393.80" font-size="18.5" font-weight="400" fill="#D9D9D9" textLength="20.58" lengthAdjust="spacingAndGlyphs">33</text>
</g>
<rect x="11.00" y="1398.90" width="39.50" height="1.20" fill="#3C3C3C"/>
<clipPath id="rc34"><rect x="11" y="1400.00" width="40" height="37.60"/></clipPath>
<g clip-path="url(#rc34)">
<text x="20.44" y="1432.00" font-size="18.5" font-weight="400" fill="#D9D9D9" textLength="20.58" lengthAdjust="spacingAndGlyphs">34</text>
</g>
<rect x="11.00" y="1437.10" width="39.50" height="1.20" fill="#3C3C3C"/>
<clipPath id="rc35"><rect x="11" y="1438.20" width="40" height="30.50"/></clipPath>
<g clip-path="url(#rc35)">
<text x="20.56" y="1463.10" font-size="18.5" font-weight="400" fill="#D9D9D9" textLength="20.58" lengthAdjust="spacingAndGlyphs">35</text>
</g>
<rect x="11.00" y="1468.20" width="39.50" height="1.20" fill="#3C3C3C"/>
<clipPath id="rc36"><rect x="11" y="1469.30" width="40" height="37.30"/></clipPath>
<g clip-path="url(#rc36)">
<text x="20.58" y="1501.00" font-size="18.5" font-weight="400" fill="#D9D9D9" textLength="20.58" lengthAdjust="spacingAndGlyphs">36</text>
</g>
<rect x="11.00" y="1506.10" width="39.50" height="1.20" fill="#3C3C3C"/>
<rect x="11.00" y="1510.90" width="39.50" height="1.20" fill="#3C3C3C"/>
<clipPath id="rc38"><rect x="11" y="1512.00" width="40" height="37.40"/></clipPath>
<g clip-path="url(#rc38)">
<text x="20.58" y="1543.80" font-size="18.5" font-weight="400" fill="#D9D9D9" textLength="20.58" lengthAdjust="spacingAndGlyphs">38</text>
</g>
<rect x="11.00" y="1548.90" width="39.50" height="1.20" fill="#3C3C3C"/>
<rect x="11.00" y="1554.00" width="39.50" height="1.20" fill="#3C3C3C"/>
<clipPath id="rc40"><rect x="11" y="1555.10" width="40" height="35.40"/></clipPath>
<g clip-path="url(#rc40)">
<text x="20.67" y="1584.90" font-size="18.5" font-weight="400" fill="#D9D9D9" textLength="20.58" lengthAdjust="spacingAndGlyphs">40</text>
</g>
<rect x="11.00" y="1590.00" width="39.50" height="1.20" fill="#3C3C3C"/>
<clipPath id="rc41"><rect x="11" y="1591.10" width="40" height="34.90"/></clipPath>
<g clip-path="url(#rc41)">
<text x="20.76" y="1620.40" font-size="18.5" font-weight="400" fill="#D9D9D9" textLength="20.58" lengthAdjust="spacingAndGlyphs">41</text>
</g>
<rect x="11.00" y="1625.50" width="39.50" height="1.20" fill="#3C3C3C"/>
<clipPath id="rc42"><rect x="11" y="1626.60" width="40" height="38.10"/></clipPath>
<g clip-path="url(#rc42)">
<text x="20.79" y="1659.10" font-size="18.5" font-weight="400" fill="#D9D9D9" textLength="20.58" lengthAdjust="spacingAndGlyphs">42</text>
</g>
<rect x="11.00" y="1664.20" width="39.50" height="1.20" fill="#3C3C3C"/>
<clipPath id="rc43"><rect x="11" y="1665.30" width="40" height="38.70"/></clipPath>
<g clip-path="url(#rc43)">
<text x="20.72" y="1694.70" font-size="18.5" font-weight="400" fill="#D9D9D9" textLength="20.58" lengthAdjust="spacingAndGlyphs">43</text>
</g>
</g>
<rect x="11.00" y="1669.50" width="2849.50" height="1.00" fill="#2a2a2a"/>
<rect x="2860.50" y="278.00" width="29.50" height="1392.00" fill="#161616"/>
<polygon points="2876,284.5 2870.5,293.5 2881.5,293.5" fill="#9A9A9A"/>
<rect x="2870" y="304" width="12" height="1287" rx="6" fill="#9E9E9E"/>
<polygon points="2876,1663.5 2870.5,1654.5 2881.5,1654.5" fill="#9A9A9A"/>
<rect x="11.00" y="1670.50" width="2879.00" height="47.50" fill="#0A0A0A"/>
<polyline points="54.5,1686 47,1692.7 54.5,1699.4" fill="none" stroke="#9a9a9a" stroke-width="1.6"/>
<polyline points="95.5,1686 103,1692.7 95.5,1699.4" fill="none" stroke="#9a9a9a" stroke-width="1.6"/>
<text x="189.55" y="1703.00" font-size="20.2" font-weight="400" fill="#F2F2F2" textLength="83.99" lengthAdjust="spacingAndGlyphs">Contents</text>
<rect x="292.10" y="1679.00" width="1.20" height="30.00" fill="#6a6a6a"/>
<rect x="432.90" y="1679.00" width="1.20" height="30.00" fill="#6a6a6a"/>
<rect x="551.80" y="1679.00" width="1.20" height="30.00" fill="#6a6a6a"/>
<rect x="722.80" y="1679.00" width="1.20" height="30.00" fill="#6a6a6a"/>
<rect x="824.80" y="1679.00" width="1.20" height="30.00" fill="#6a6a6a"/>
<rect x="924.80" y="1679.00" width="1.20" height="30.00" fill="#6a6a6a"/>
<rect x="1050.70" y="1679.00" width="1.20" height="30.00" fill="#6a6a6a"/>
<rect x="1153.60" y="1679.00" width="1.20" height="30.00" fill="#6a6a6a"/>
<rect x="1208.80" y="1679.00" width="1.20" height="30.00" fill="#6a6a6a"/>
<rect x="1269.70" y="1679.00" width="1.20" height="30.00" fill="#6a6a6a"/>
<rect x="1330.80" y="1679.00" width="1.20" height="30.00" fill="#6a6a6a"/>
<rect x="1458.80" y="1679.00" width="1.20" height="30.00" fill="#6a6a6a"/>
<rect x="1586.70" y="1679.00" width="1.20" height="30.00" fill="#6a6a6a"/>
<rect x="1713.80" y="1679.00" width="1.20" height="30.00" fill="#6a6a6a"/>
<rect x="1774.40" y="1679.00" width="1.20" height="30.00" fill="#6a6a6a"/>
<rect x="1859.40" y="1679.00" width="1.20" height="30.00" fill="#6a6a6a"/>
<rect x="1957.70" y="1679.00" width="1.20" height="30.00" fill="#6a6a6a"/>
<rect x="2034.70" y="1679.00" width="1.20" height="30.00" fill="#6a6a6a"/>
<rect x="299.2" y="1676.2" width="127.80" height="35.5" rx="6" fill="#FFE96B"/>
<text x="312.02" y="1703.00" font-size="20.2" font-weight="400" fill="#111" textLength="101.79" lengthAdjust="spacingAndGlyphs">Dashboard</text>
<rect x="440.2" y="1676.2" width="105.50" height="35.5" rx="6" fill="#FFE96B"/>
<text x="450.90" y="1703.00" font-size="20.2" font-weight="400" fill="#111" textLength="83.29" lengthAdjust="spacingAndGlyphs">Revenue</text>
<rect x="559" y="1676.2" width="157.80" height="35.5" rx="6" fill="#FFE96B"/>
<text x="565.34" y="1703.00" font-size="20.2" font-weight="400" fill="#111" textLength="144.53" lengthAdjust="spacingAndGlyphs">COGS &amp; OPEX</text>
<rect x="730" y="1676.2" width="88.80" height="35.5" rx="6" fill="#FFE96B"/>
<text x="742.44" y="1703.00" font-size="20.2" font-weight="400" fill="#111" textLength="63.60" lengthAdjust="spacingAndGlyphs">Payroll</text>
<rect x="832" y="1676.2" width="86.80" height="35.5" rx="6" fill="#FFE96B"/>
<text x="839.85" y="1703.00" font-size="20.2" font-weight="400" fill="#111" textLength="70.54" lengthAdjust="spacingAndGlyphs">CAPEX</text>
<rect x="932" y="1676.2" width="112.60" height="35.5" rx="6" fill="#FFE96B"/>
<text x="944.27" y="1703.00" font-size="20.2" font-weight="400" fill="#111" textLength="87.91" lengthAdjust="spacingAndGlyphs">CapTable</text>
<rect x="1058" y="1676.2" width="89.70" height="35.5" rx="6" fill="#FFE96B"/>
<text x="1070.65" y="1703.00" font-size="20.2" font-weight="400" fill="#111" textLength="64.77" lengthAdjust="spacingAndGlyphs">Capital</text>
<rect x="1160.8" y="1676.2" width="42.00" height="35.5" rx="6" fill="#4DB3E8"/>
<text x="1171.48" y="1703.00" font-size="20.2" font-weight="400" fill="#111" textLength="19.66" lengthAdjust="spacingAndGlyphs">IS</text>
<rect x="1216" y="1676.2" width="47.60" height="35.5" rx="6" fill="#4DB3E8"/>
<text x="1225.83" y="1703.00" font-size="20.2" font-weight="400" fill="#111" textLength="27.74" lengthAdjust="spacingAndGlyphs">CF</text>
<rect x="1277" y="1676.2" width="47.70" height="35.5" rx="6" fill="#4DB3E8"/>
<text x="1286.57" y="1703.00" font-size="20.2" font-weight="400" fill="#111" textLength="27.75" lengthAdjust="spacingAndGlyphs">BS</text>
<rect x="1338" y="1676.2" width="114.80" height="35.5" rx="6" fill="#4DB3E8"/>
<text x="1349.03" y="1703.00" font-size="20.2" font-weight="400" fill="#111" textLength="92.52" lengthAdjust="spacingAndGlyphs">Scenarios</text>
<rect x="1466" y="1676.2" width="114.70" height="35.5" rx="6" fill="#4DB3E8"/>
<text x="1481.35" y="1703.00" font-size="20.2" font-weight="400" fill="#111" textLength="85.22" lengthAdjust="spacingAndGlyphs">Valuation</text>
<rect x="1593.8" y="1676.2" width="113.90" height="35.5" rx="6" fill="#4DB3E8"/>
<text x="1605.81" y="1703.00" font-size="20.2" font-weight="400" fill="#111" textLength="89.02" lengthAdjust="spacingAndGlyphs">Summary</text>
<rect x="1721" y="1676.2" width="47.80" height="35.5" rx="6" fill="#4DB3E8"/>
<text x="1730.60" y="1703.00" font-size="20.2" font-weight="400" fill="#111" textLength="27.75" lengthAdjust="spacingAndGlyphs">BE</text>
<rect x="1867" y="1676.2" width="85.00" height="35.5" rx="6" fill="#4DB3E8"/>
<text x="1878.71" y="1703.00" font-size="20.2" font-weight="400" fill="#111" textLength="61.28" lengthAdjust="spacingAndGlyphs">Charts</text>
<rect x="1964.6" y="1676.2" width="64.40" height="35.5" rx="6" fill="#4DB3E8"/>
<text x="1974.33" y="1703.00" font-size="20.2" font-weight="400" fill="#111" textLength="43.94" lengthAdjust="spacingAndGlyphs">KPIs</text>
<defs><linearGradient id="tabg" x1="0" y1="0" x2="0" y2="1"><stop offset="0" stop-color="#FFFFFF"/><stop offset="0.35" stop-color="#F4F9FD"/><stop offset="1" stop-color="#C3E2F6"/></linearGradient></defs>
<rect x="1776.40" y="1669.50" width="83.10" height="6.50" fill="#ffffff"/>
<circle cx="1776.4" cy="1676" r="5.5" fill="#0A0A0A"/><circle cx="1859.5" cy="1676" r="5.5" fill="#0A0A0A"/>
<path d="M1781.9,1669.5 L1854,1669.5 L1854,1706.5 Q1854,1712 1848.5,1712 L1787.4,1712 Q1781.9,1712 1781.9,1706.5 Z" fill="url(#tabg)"/>
<text x="1794.00" y="1697.50" font-size="20.2" font-weight="400" fill="#1a1a1a" textLength="48.53" lengthAdjust="spacingAndGlyphs">ROIC</text>
<rect x="1794.00" y="1705.30" width="48.00" height="2.70" fill="#1A7F4A"/>
<clipPath id="scclip"><rect x="2041.5" y="1670" width="30.5" height="48"/></clipPath>
<g clip-path="url(#scclip)">
<rect x="2041.5" y="1676.2" width="80" height="35.5" rx="6" fill="#4DB3E8"/>
<text x="2051.11" y="1703.00" font-size="20.2" font-weight="400" fill="#111" textLength="88.03" lengthAdjust="spacingAndGlyphs">Scenarios</text>
</g>
<circle cx="2089" cy="1692.5" r="2" fill="#e0e0e0"/>
<circle cx="2095" cy="1692.5" r="2" fill="#e0e0e0"/>
<circle cx="2101" cy="1692.5" r="2" fill="#e0e0e0"/>
<rect x="2135.00" y="1692.00" width="16.00" height="1.40" fill="#e0e0e0"/>
<rect x="2142.30" y="1684.70" width="1.40" height="16.00" fill="#e0e0e0"/>
<circle cx="2191.8" cy="1686.5" r="1.8" fill="#e0e0e0"/>
<circle cx="2191.8" cy="1692.5" r="1.8" fill="#e0e0e0"/>
<circle cx="2191.8" cy="1698.5" r="1.8" fill="#e0e0e0"/>
<rect x="2216" y="1680" width="644" height="26" rx="13" fill="#141414"/>
<polygon points="2223,1692.5 2233,1686.5 2233,1698.5" fill="#9A9A9A"/>
<rect x="2242" y="1686.6" width="442.6" height="11.8" rx="5.9" fill="#9E9E9E"/>
<polygon points="2852,1692.5 2842,1686.5 2842,1698.5" fill="#9A9A9A"/>
<rect x="11.00" y="1718.00" width="2879.00" height="33.00" fill="#141414"/>
<rect x="11.00" y="1717.60" width="2879.00" height="1.00" fill="#2c2c2c"/>
<text x="25.95" y="1740.50" font-size="17" font-weight="400" fill="#E6E6E6" textLength="43.90" lengthAdjust="spacingAndGlyphs">Ready</text>
<g fill="none" stroke="#f2f2f2" stroke-width="2"><path d="M107.5,1742.7 L100.1,1742.7 L100.1,1727 L119.9,1727 L119.9,1733"/><line x1="101" y1="1729.2" x2="119" y2="1729.2" stroke-width="1.4"/><circle cx="113.9" cy="1738.6" r="5.6"/></g><circle cx="113.9" cy="1738.6" r="3.3" fill="#f2f2f2"/><g stroke="#f2f2f2" stroke-width="1.6"><line x1="102" y1="1732.6" x2="106" y2="1732.6"/><line x1="102" y1="1735.7" x2="106" y2="1735.7"/><line x1="102" y1="1738.8" x2="106" y2="1738.8"/></g>
<g fill="none" stroke="#f2f2f2" stroke-width="1.5" stroke-linecap="round" stroke-linejoin="round"><circle cx="155.4" cy="1727.6" r="2.4"/><path d="M147,1729.5 Q148.5,1731.5 153,1731.8 L153.5,1736 L151.5,1744 Q152.5,1745.5 154,1744 L155.5,1739 M147,1729.5 Q146.2,1728 147.8,1727.5 Q151,1729.5 155.4,1730.2 Q160,1729.5 163,1727.5 Q164.5,1728 164,1729.5 Q162,1731.5 158,1731.8 L157.5,1734.5"/><line x1="157.8" y1="1735.8" x2="167" y2="1745"/><line x1="167" y1="1735.8" x2="157.8" y2="1745"/></g>
<text x="172.91" y="1740.50" font-size="17" font-weight="700" fill="#F2F2F2" textLength="188.04" lengthAdjust="spacingAndGlyphs">Accessibility: Investigate</text>
<rect x="2445.00" y="1718.60" width="60.00" height="32.40" fill="#262626"/>
<g fill="none" stroke="#f0f0f0" stroke-width="2">
<rect x="2465.3" y="1725.5" width="17.6" height="17.3"/><line x1="2465.3" y1="1731.3" x2="2482.9" y2="1731.3"/><line x1="2465.3" y1="1737.1" x2="2482.9" y2="1737.1"/><line x1="2471.2" y1="1725.5" x2="2471.2" y2="1742.8"/><line x1="2477.1" y1="1725.5" x2="2477.1" y2="1742.8"/>
<rect x="2525" y="1725.5" width="19.8" height="17.3"/><rect x="2529.5" y="1729.5" width="10.8" height="9.8" stroke-width="1.6"/><line x1="2531.5" y1="1732.3" x2="2538.3" y2="1732.3" stroke-width="1.3"/><line x1="2531.5" y1="1734.5" x2="2538.3" y2="1734.5" stroke-width="1.3"/><line x1="2531.5" y1="1736.7" x2="2538.3" y2="1736.7" stroke-width="1.3"/>
<rect x="2585" y="1725.5" width="19.6" height="17.3"/><path d="M2590.8,1725.5 L2590.8,1734.4 L2596.8,1734.4 L2596.8,1725.5"/>
</g>
<rect x="2633.20" y="1733.70" width="11.60" height="1.40" fill="#d0d0d0"/>
<rect x="2652.80" y="1733.60" width="148.40" height="1.60" fill="#b0b0b0"/>
<rect x="2726.00" y="1731.00" width="1.20" height="7.00" fill="#b0b0b0"/>
<rect x="2729.00" y="1725.80" width="7.80" height="16.80" fill="#c4c4c4"/>
<rect x="2808.70" y="1733.70" width="12.10" height="1.40" fill="#d0d0d0"/>
<rect x="2814.05" y="1728.30" width="1.40" height="12.20" fill="#d0d0d0"/>
<text x="2839.23" y="1740.80" font-size="16" font-weight="400" fill="#E6E6E6" textLength="40.02" lengthAdjust="spacingAndGlyphs">125%</text>
<g><rect x="40" y="35" width="18" height="24" rx="2.5" fill="#1E7B3C"/><rect x="40" y="35" width="18" height="8" rx="2" fill="#9BE07A"/><rect x="40" y="35" width="9" height="8" fill="#5FCB5F"/><rect x="35" y="44" width="12" height="12" rx="2" fill="#0F5A2A"/></g>
<text x="37.67" y="53.50" font-size="12" font-weight="700" fill="#fff" textLength="6.67" lengthAdjust="spacingAndGlyphs">x</text>
<text x="94.75" y="53.80" font-size="17.6" font-weight="400" fill="#F2F2F2" textLength="257.81" lengthAdjust="spacingAndGlyphs">cocoa-farming.xlsx  -  Read-Only</text>
<polyline points="363.5,44 369,50 374.5,44" fill="none" stroke="#F2F2F2" stroke-width="1.7"/>
<g fill="none" stroke="#f0f0f0" stroke-width="1.6"><circle cx="2488.4" cy="44" r="7.3"/><line x1="2483.2" y1="49.5" x2="2476" y2="57.3"/></g>
<defs><clipPath id="av"><circle cx="2570.9" cy="46.8" r="18"/></clipPath><linearGradient id="avg" x1="0" y1="0" x2="0" y2="1"><stop offset="0" stop-color="#8FA9C8"/><stop offset="0.45" stop-color="#B9D3DC"/><stop offset="0.6" stop-color="#7FB8B8"/><stop offset="1" stop-color="#9CC0C0"/></linearGradient></defs>
<g clip-path="url(#av)"><rect x="2552" y="28" width="38" height="38" fill="url(#avg)"/><ellipse cx="2571" cy="45" rx="7.2" ry="9" fill="#C9A58C"/><ellipse cx="2571" cy="39" rx="6.5" ry="5" fill="#D8B8A0"/><path d="M2556,66 Q2558,56 2566,54 L2576,54 Q2584,56 2586,66 Z" fill="#D9CFC0"/></g>
<g fill="none" stroke="#f0f0f0" stroke-width="1.6" stroke-linejoin="round"><path d="M2634,37 L2648,37 L2652.5,43.5 L2641,56 L2629.5,43.5 Z M2629.5,43.5 L2652.5,43.5 M2636,43.5 L2641,56 L2646,43.5 M2637,37 L2636,43.5 M2645,37 L2646,43.5"/></g>
<rect x="2703.50" y="45.60" width="15.00" height="1.40" fill="#f0f0f0"/>
<g fill="none" stroke="#f0f0f0" stroke-width="1.5"><rect x="2775.8" y="42.8" width="11.8" height="11.8" rx="2"/><path d="M2779,40 L2787.5,40 Q2790.5,40 2790.5,43 L2790.5,51.5"/></g>
<g stroke="#f0f0f0" stroke-width="1.6"><line x1="2847.5" y1="39.8" x2="2862.6" y2="54.8"/><line x1="2862.6" y1="39.8" x2="2847.5" y2="54.8"/></g>
<text x="40.76" y="113.80" font-size="19" font-weight="400" fill="#F2F2F2" textLength="32.12" lengthAdjust="spacingAndGlyphs">File</text>
<text x="110.33" y="113.80" font-size="19" font-weight="700" fill="#F2F2F2" textLength="56.45" lengthAdjust="spacingAndGlyphs">Home</text>
<text x="196.79" y="113.80" font-size="19" font-weight="400" fill="#F2F2F2" textLength="48.98" lengthAdjust="spacingAndGlyphs">Insert</text>
<text x="275.66" y="113.80" font-size="19" font-weight="400" fill="#F2F2F2" textLength="46.26" lengthAdjust="spacingAndGlyphs">Draw</text>
<text x="351.42" y="113.80" font-size="19" font-weight="400" fill="#F2F2F2" textLength="107.34" lengthAdjust="spacingAndGlyphs">Page Layout</text>
<text x="489.37" y="113.80" font-size="19" font-weight="400" fill="#F2F2F2" textLength="82.32" lengthAdjust="spacingAndGlyphs">Formulas</text>
<text x="598.15" y="113.80" font-size="19" font-weight="400" fill="#F2F2F2" textLength="42.25" lengthAdjust="spacingAndGlyphs">Data</text>
<text x="669.36" y="113.80" font-size="19" font-weight="400" fill="#F2F2F2" textLength="61.07" lengthAdjust="spacingAndGlyphs">Review</text>
<text x="761.70" y="113.80" font-size="19" font-weight="400" fill="#F2F2F2" textLength="41.04" lengthAdjust="spacingAndGlyphs">View</text>
<text x="833.95" y="113.80" font-size="19" font-weight="400" fill="#F2F2F2" textLength="87.43" lengthAdjust="spacingAndGlyphs">Automate</text>
<text x="949.34" y="113.80" font-size="19" font-weight="400" fill="#F2F2F2" textLength="41.51" lengthAdjust="spacingAndGlyphs">Help</text>
<rect x="111.2" y="120.2" width="57.8" height="3.1" rx="1.5" fill="#5DBB83"/>
<rect x="2621.5" y="87.1" width="134" height="35" rx="5" fill="#232323" stroke="#4d4d4d" stroke-width="1.2"/>
<path d="M2629.5,97.5 L2644.5,97.5 L2644.5,108.5 L2635,108.5 L2631,112.5 L2631,108.5 L2629.5,108.5 Z" fill="none" stroke="#f0f0f0" stroke-width="1.4" stroke-linejoin="round"/>
<text x="2651.82" y="112.80" font-size="18.4" font-weight="400" fill="#F2F2F2" textLength="94.45" lengthAdjust="spacingAndGlyphs">Comments</text>
<rect x="2768.1" y="87.1" width="104.7" height="35" rx="5" fill="#3DAA5C"/>
<path d="M2776,101 L2776,113 L2791,113 L2791,108 M2779,109 Q2780,100 2788,100 L2788,96 L2793,101.5 L2788,107 L2788,103.5 Q2782,103.5 2779,109 Z" fill="none" stroke="#0d1f12" stroke-width="1.4" stroke-linejoin="round"/>
<text x="2798.76" y="112.80" font-size="18.4" font-weight="400" fill="#0B1A10" textLength="49.85" lengthAdjust="spacingAndGlyphs">Share</text>
<polyline points="2858.5,102.5 2862,106 2865.5,102.5" fill="none" stroke="#0b1a10" stroke-width="1.5"/>
<rect x="23.3" y="128.3" width="2855" height="149.6" rx="12" fill="#292929"/>
<rect x="281.90" y="134.80" width="1.20" height="133.90" fill="#4a4a4a"/>
<rect x="633.00" y="134.80" width="1.20" height="133.90" fill="#4a4a4a"/>
<rect x="1083.00" y="134.80" width="1.20" height="133.90" fill="#4a4a4a"/>
<rect x="1324.90" y="134.80" width="1.20" height="133.90" fill="#4a4a4a"/>
<rect x="1543.70" y="134.80" width="1.20" height="133.90" fill="#4a4a4a"/>
<rect x="1867.80" y="134.80" width="1.20" height="133.90" fill="#4a4a4a"/>
<rect x="1962.40" y="134.80" width="1.20" height="133.90" fill="#4a4a4a"/>
<rect x="2055.80" y="134.80" width="1.20" height="133.90" fill="#4a4a4a"/>
<text x="108.18" y="267.70" font-size="16" font-weight="400" fill="#E8E8E8" textLength="69.84" lengthAdjust="spacingAndGlyphs">Clipboard</text>
<text x="428.68" y="267.70" font-size="16" font-weight="400" fill="#E8E8E8" textLength="32.06" lengthAdjust="spacingAndGlyphs">Font</text>
<text x="809.96" y="267.70" font-size="16" font-weight="400" fill="#E8E8E8" textLength="72.15" lengthAdjust="spacingAndGlyphs">Alignment</text>
<text x="1161.63" y="267.70" font-size="16" font-weight="400" fill="#E8E8E8" textLength="59.05" lengthAdjust="spacingAndGlyphs">Number</text>
<text x="1417.14" y="267.70" font-size="16" font-weight="400" fill="#E8E8E8" textLength="33.69" lengthAdjust="spacingAndGlyphs">Cells</text>
<text x="1680.65" y="267.70" font-size="16" font-weight="400" fill="#E8E8E8" textLength="50.18" lengthAdjust="spacingAndGlyphs">Editing</text>
<text x="1887.66" y="267.70" font-size="16" font-weight="400" fill="#E8E8E8" textLength="53.91" lengthAdjust="spacingAndGlyphs">Add-ins</text>
<g fill="none" stroke="#d8d8d8" stroke-width="1.3"><path d="M264.8,268.5 L264.8,256.5 L276.8,256.5" /><path d="M267.8,259.5 L275.8,267.5 M275.8,261.5 L275.8,267.5 L269.8,267.5"/></g>
<g fill="none" stroke="#d8d8d8" stroke-width="1.3"><path d="M616,268.5 L616,256.5 L628,256.5" /><path d="M619,259.5 L627,267.5 M627,261.5 L627,267.5 L621,267.5"/></g>
<g fill="none" stroke="#d8d8d8" stroke-width="1.3"><path d="M1065.7,268.5 L1065.7,256.5 L1077.7,256.5" /><path d="M1068.7,259.5 L1076.7,267.5 M1076.7,261.5 L1076.7,267.5 L1070.7,267.5"/></g>
<g fill="none" stroke="#d8d8d8" stroke-width="1.3"><path d="M1307.7,268.5 L1307.7,256.5 L1319.7,256.5" /><path d="M1310.7,259.5 L1318.7,267.5 M1318.7,261.5 L1318.7,267.5 L1312.7,267.5"/></g>
<g fill="none" stroke="#9c9c9c" stroke-width="3.4"><path d="M62,148.8 L57.1,148.8 L57.1,181.1 L76,181.1"/><path d="M80.5,148.8 L85,148.8 L85,158"/></g>
<path d="M62.5,152.5 L62.5,147.5 L67,147.5 Q67,141 71.25,141 Q75.5,141 75.5,147.5 L80,147.5 L80,152.5 Z" fill="#292929" stroke="#a8a8a8" stroke-width="1.6"/>
<rect x="75.9" y="159.7" width="19.2" height="25.2" fill="#292929" stroke="#b4b4b4" stroke-width="1.6"/>
<text x="50.76" y="209.60" font-size="18" font-weight="400" fill="#7c7c7c" textLength="41.46" lengthAdjust="spacingAndGlyphs">Paste</text>
<polyline points="67,224 71.25,228.3 75.5,224" fill="none" stroke="#7c7c7c" stroke-width="1.5"/>
<g fill="none" stroke="#d6d6d6" stroke-width="1.2"><line x1="119.6" y1="140.3" x2="127.6" y2="158.3"/><line x1="128.8" y1="140.3" x2="120.8" y2="158.3"/></g><g fill="none" stroke="#3E93DA" stroke-width="2"><circle cx="119.1" cy="160.7" r="2.6"/><circle cx="128.3" cy="160.7" r="2.6"/></g>
<text x="141.12" y="159.10" font-size="17.5" font-weight="400" fill="#F2F2F2" textLength="27.44" lengthAdjust="spacingAndGlyphs">Cut</text>
<g fill="none" stroke="#d6d6d6" stroke-width="1.4" stroke-linejoin="miter"><path d="M121.5,199.7 L112.4,199.7 L112.4,179.1 L121,179.1 L123.5,181.5"/><path d="M121.3,183.2 L129.3,183.2 L136,189.8 L136,202.6 L121.3,202.6 Z M129.3,183.2 L129.3,189.8 L136,189.8"/><path d="M125,195 L132,195 M125,198 L132,198"/></g>
<text x="141.09" y="197.70" font-size="17.5" font-weight="400" fill="#F2F2F2" textLength="42.55" lengthAdjust="spacingAndGlyphs">Copy</text>
<polyline points="211,190 215.5,194.5 220,190" fill="none" stroke="#d8d8d8" stroke-width="1.5"/>
<g stroke-linejoin="round"><path d="M112.3,228.6 L124,222.8 L132.3,231.5 L123.2,239.3 Z" fill="#292929" stroke="#EDD27A" stroke-width="1.4"/><path d="M118,234.5 L127.5,235 L123.2,239.3 Z" fill="#E9A51C"/><path d="M123.8,224.5 L132.4,233.2 L128.6,225.6 Z" fill="#292929" stroke="#d6d6d6" stroke-width="1.4"/><path d="M127,228 L134,221 Q135.8,219.3 137.2,221 Q138.5,222.7 136.7,224.2 L130,231" fill="#292929" stroke="#d6d6d6" stroke-width="1.4"/></g>
<text x="141.05" y="237.00" font-size="17.5" font-weight="400" fill="#F2F2F2" textLength="116.54" lengthAdjust="spacingAndGlyphs">Format Painter</text>
<rect x="295.2" y="146" width="180.00" height="35.5" rx="6" fill="#242424" stroke="#6a6a6a" stroke-width="1.2"/>
<polyline points="462.2,161 466.2,165 470.2,161" fill="none" stroke="#e0e0e0" stroke-width="1.5"/>
<text x="297.90" y="171.00" font-size="18.4" font-weight="400" fill="#F2F2F2" textLength="63.26" lengthAdjust="spacingAndGlyphs">Tahoma</text>
<rect x="479.5" y="146" width="64.30" height="35.5" rx="6" fill="#242424" stroke="#6a6a6a" stroke-width="1.2"/>
<polyline points="530.8,161 534.8,165 538.8,161" fill="none" stroke="#e0e0e0" stroke-width="1.5"/>
<text x="481.24" y="171.00" font-size="18.4" font-weight="400" fill="#F2F2F2" textLength="9.93" lengthAdjust="spacingAndGlyphs">8</text>
<text x="553.95" y="170.30" font-size="22" font-weight="400" fill="#d8d8d8" textLength="14.67" lengthAdjust="spacingAndGlyphs">A</text>
<polyline points="571,159 574.5,155 578,159" fill="none" stroke="#4BA3E3" stroke-width="1.6"/>
<text x="595.95" y="170.30" font-size="19" font-weight="400" fill="#d8d8d8" textLength="12.67" lengthAdjust="spacingAndGlyphs">A</text>
<polyline points="609,155 612.5,159 616,155" fill="none" stroke="#4BA3E3" stroke-width="1.6"/>
<text x="305.73" y="218.40" font-size="19" font-weight="700" fill="#d8d8d8" textLength="13.62" lengthAdjust="spacingAndGlyphs">B</text>
<g stroke="#d8d8d8" stroke-width="1.5" fill="none"><line x1="352" y1="204" x2="358.5" y2="204"/><line x1="346" y1="218" x2="352.5" y2="218"/><line x1="355.3" y1="204" x2="349.3" y2="218"/></g>
<text x="381.70" y="217.00" font-size="18" font-weight="400" fill="#d8d8d8" textLength="16.80" lengthAdjust="spacingAndGlyphs">U</text>
<rect x="383.00" y="220.00" width="14.00" height="1.60" fill="#d8d8d8"/>
<polyline points="415,210.5 419,214.5 423,210.5" fill="none" stroke="#e0e0e0" stroke-width="1.5"/>
<rect x="434.00" y="194.00" width="1.20" height="35.60" fill="#4a4a4a"/>
<g fill="none" stroke="#d8d8d8" stroke-width="1.2" stroke-dasharray="1.5,1.5"><rect x="444.5" y="200.5" width="22" height="19"/><line x1="455.5" y1="200.5" x2="455.5" y2="219.5"/><line x1="444.5" y1="210" x2="466.5" y2="210"/></g>
<rect x="444.00" y="220.50" width="23.00" height="1.80" fill="#d8d8d8"/>
<polyline points="480,210.5 484,214.5 488,210.5" fill="none" stroke="#e0e0e0" stroke-width="1.5"/>
<rect x="499.00" y="194.00" width="1.20" height="35.60" fill="#4a4a4a"/>
<path d="M524.5,207.8 L526.6,209.8 L519.5,217 L512.4,209.9 L519.6,202.7" fill="none" stroke="#dcdcdc" stroke-width="1.5" stroke-linejoin="miter"/><path d="M520.3,205 L520.3,201.5 Q521.6,199.6 523,201.2 L523.3,208.6" fill="none" stroke="#dcdcdc" stroke-width="1.5"/><path d="M526.3,206 Q530.6,206.8 529.8,215.2 Q528.3,210 526.3,208.2 Z" fill="#8CC4F0"/>
<rect x="508.70" y="218.00" width="24.30" height="6.00" fill="#FFF200"/>
<polyline points="545,210.5 549,214.5 553,210.5" fill="none" stroke="#e0e0e0" stroke-width="1.5"/>
<text x="574.95" y="216.80" font-size="22" font-weight="400" fill="#dcdcdc" textLength="14.40" lengthAdjust="spacingAndGlyphs">A</text>
<rect x="569.60" y="218.00" width="24.40" height="6.00" fill="#F00000"/>
<polyline points="605.7,210.5 609.7,214.5 613.7,210.5" fill="none" stroke="#e0e0e0" stroke-width="1.5"/>
<rect x="653.00" y="151.20" width="21.50" height="1.60" fill="#d8d8d8"/>
<rect x="656.25" y="156.70" width="15.00" height="1.60" fill="#d8d8d8"/>
<rect x="653.00" y="162.20" width="21.50" height="1.60" fill="#d8d8d8"/>
<rect x="685" y="146" width="35" height="35.5" rx="6" fill="#3a3a3a" stroke="#7a7a7a" stroke-width="1.2"/>
<rect x="692.00" y="156.20" width="21.50" height="1.60" fill="#d8d8d8"/>
<rect x="695.25" y="162.20" width="15.00" height="1.60" fill="#d8d8d8"/>
<rect x="692.00" y="168.20" width="21.50" height="1.60" fill="#d8d8d8"/>
<rect x="731.00" y="162.20" width="21.50" height="1.60" fill="#d8d8d8"/>
<rect x="734.25" y="168.20" width="15.00" height="1.60" fill="#d8d8d8"/>
<rect x="731.00" y="174.20" width="21.50" height="1.60" fill="#d8d8d8"/>
<rect x="762.70" y="146.00" width="1.20" height="35.00" fill="#4a4a4a"/>
<text x="772.42" y="166.00" font-size="13" font-weight="400" fill="#d8d8d8" textLength="15.16" lengthAdjust="spacingAndGlyphs" transform="rotate(-40 780 160)">ab</text>
<g stroke="#4BA3E3" stroke-width="1.6" fill="none"><line x1="781" y1="174" x2="797" y2="158"/><polyline points="790,158 797,158 797,165"/></g>
<polyline points="805.6,162 809.6,166 813.6,162" fill="none" stroke="#e0e0e0" stroke-width="1.5"/>
<rect x="653.30" y="200.70" width="21.50" height="1.60" fill="#d8d8d8"/>
<rect x="653.30" y="206.70" width="13.00" height="1.60" fill="#d8d8d8"/>
<rect x="653.30" y="212.70" width="21.50" height="1.60" fill="#d8d8d8"/>
<rect x="653.30" y="218.70" width="13.00" height="1.60" fill="#d8d8d8"/>
<rect x="692.00" y="200.70" width="21.50" height="1.60" fill="#d8d8d8"/>
<rect x="696.25" y="206.70" width="13.00" height="1.60" fill="#d8d8d8"/>
<rect x="692.00" y="212.70" width="21.50" height="1.60" fill="#d8d8d8"/>
<rect x="696.25" y="218.70" width="13.00" height="1.60" fill="#d8d8d8"/>
<rect x="731.00" y="200.70" width="21.50" height="1.60" fill="#d8d8d8"/>
<rect x="739.50" y="206.70" width="13.00" height="1.60" fill="#d8d8d8"/>
<rect x="731.00" y="212.70" width="21.50" height="1.60" fill="#d8d8d8"/>
<rect x="739.50" y="218.70" width="13.00" height="1.60" fill="#d8d8d8"/>
<rect x="762.70" y="194.00" width="1.20" height="36.00" fill="#4a4a4a"/>
<rect x="774.00" y="200.70" width="22.00" height="1.60" fill="#d8d8d8"/>
<rect x="774.00" y="218.70" width="22.00" height="1.60" fill="#d8d8d8"/>
<rect x="783.00" y="206.70" width="13.00" height="1.60" fill="#d8d8d8"/>
<rect x="783.00" y="212.70" width="13.00" height="1.60" fill="#d8d8d8"/>
<g stroke="#4BA3E3" stroke-width="1.6" fill="none"><line x1="775" y1="210.5" x2="782" y2="210.5"/><polyline points="778.5,207 775,210.5 778.5,214"/></g>
<rect x="813.00" y="200.70" width="22.00" height="1.60" fill="#d8d8d8"/>
<rect x="813.00" y="218.70" width="22.00" height="1.60" fill="#d8d8d8"/>
<rect x="822.00" y="206.70" width="13.00" height="1.60" fill="#d8d8d8"/>
<rect x="822.00" y="212.70" width="13.00" height="1.60" fill="#d8d8d8"/>
<g stroke="#4BA3E3" stroke-width="1.6" fill="none"><line x1="814" y1="210.5" x2="821" y2="210.5"/><polyline points="817.5,207 821,210.5 817.5,214"/></g>
<rect x="851.00" y="144.00" width="1.20" height="93.70" fill="#4a4a4a"/>
<text x="869.79" y="162.60" font-size="15" font-weight="400" fill="#d8d8d8" textLength="18.62" lengthAdjust="spacingAndGlyphs">ab</text>
<text x="869.90" y="173.80" font-size="15" font-weight="400" fill="#d8d8d8" textLength="7.09" lengthAdjust="spacingAndGlyphs">c</text>
<path d="M890.5,163 Q892,172.5 884,172.5 L879.5,172.5 M883,169 L879.5,172.5 L883,176" fill="none" stroke="#4BA3E3" stroke-width="1.7"/>
<text x="897.41" y="170.70" font-size="18" font-weight="400" fill="#F2F2F2" textLength="77.72" lengthAdjust="spacingAndGlyphs">Wrap Text</text>
<g fill="none" stroke="#d8d8d8" stroke-width="1.4"><rect x="867.5" y="200.5" width="22" height="22"/><line x1="867.5" y1="205" x2="889.5" y2="205"/><line x1="867.5" y1="218" x2="889.5" y2="218"/><line x1="878.5" y1="200.5" x2="878.5" y2="205"/><line x1="878.5" y1="218" x2="878.5" y2="222.5"/></g>
<g fill="none" stroke="#4BA3E3" stroke-width="1.6"><line x1="871" y1="211.5" x2="886" y2="211.5"/><polyline points="874,208.5 871,211.5 874,214.5"/><polyline points="883,208.5 886,211.5 883,214.5"/></g>
<text x="896.01" y="219.40" font-size="18" font-weight="400" fill="#F2F2F2" textLength="127.28" lengthAdjust="spacingAndGlyphs">Merge &amp; Center</text>
<polyline points="1050,210 1054,214 1058,210" fill="none" stroke="#e0e0e0" stroke-width="1.5"/>
<rect x="1096" y="146" width="217.80" height="35.5" rx="6" fill="#242424" stroke="#6a6a6a" stroke-width="1.2"/>
<polyline points="1300.8,161 1304.8,165 1308.8,161" fill="none" stroke="#e0e0e0" stroke-width="1.5"/>
<text x="1098.45" y="171.00" font-size="18.4" font-weight="400" fill="#F2F2F2" textLength="60.40" lengthAdjust="spacingAndGlyphs">General</text>
<text x="1107.19" y="220.50" font-size="21" font-weight="400" fill="#d8d8d8" textLength="11.75" lengthAdjust="spacingAndGlyphs">$</text>
<polyline points="1138,211 1142,215 1146,211" fill="none" stroke="#e0e0e0" stroke-width="1.5"/>
<text x="1162.64" y="220.50" font-size="21" font-weight="400" fill="#d8d8d8" textLength="24.29" lengthAdjust="spacingAndGlyphs">%</text>
<circle cx="1215" cy="208.5" r="4.6" fill="#d8d8d8"/><path d="M1219,209 Q1219.5,218 1210,223" fill="none" stroke="#d8d8d8" stroke-width="3"/>
<rect x="1235.00" y="194.00" width="1.20" height="36.00" fill="#4a4a4a"/>
<text x="1260.01" y="210.30" font-size="14.5" font-weight="400" fill="#d8d8d8" textLength="8.27" lengthAdjust="spacingAndGlyphs">0</text>
<text x="1248.10" y="222.50" font-size="14.5" font-weight="400" fill="#d8d8d8" textLength="20.15" lengthAdjust="spacingAndGlyphs">.00</text>
<g stroke="#4BA3E3" stroke-width="1.6" fill="none"><line x1="1245.5" y1="206.5" x2="1257" y2="206.5"/><polyline points="1249.5,202.5 1245.5,206.5 1249.5,210.5"/></g>
<text x="1286.65" y="210.30" font-size="14.5" font-weight="400" fill="#d8d8d8" textLength="20.81" lengthAdjust="spacingAndGlyphs">.00</text>
<text x="1295.17" y="222.50" font-size="14.5" font-weight="400" fill="#d8d8d8" textLength="12.30" lengthAdjust="spacingAndGlyphs">.0</text>
<g stroke="#4BA3E3" stroke-width="1.6" fill="none"><line x1="1284" y1="217.5" x2="1296" y2="217.5"/><polyline points="1292,213.5 1296,217.5 1292,221.5"/></g>
<g fill="none" stroke="#dcdcdc" stroke-width="1.4"><rect x="1348.8" y="145.8" width="40.60" height="32.40"/>
<line x1="1362.4" y1="145.8" x2="1362.4" y2="178.2"/>
<line x1="1376" y1="145.8" x2="1376" y2="178.2"/>
<line x1="1348.8" y1="156.4" x2="1389.4" y2="156.4"/>
<line x1="1348.8" y1="167.5" x2="1389.4" y2="167.5"/>
</g>
<rect x="1355" y="156" width="38" height="12" fill="#1C6FCC" stroke="#5CB2F2" stroke-width="1.2"/><line x1="1368" y1="156.5" x2="1368" y2="167.5" stroke="#5CB2F2" stroke-width="1.2"/><line x1="1380.5" y1="156.5" x2="1380.5" y2="167.5" stroke="#5CB2F2" stroke-width="1.2"/>
<g stroke="#5CB2F2" stroke-width="1.5" fill="none"><polyline points="1355.6,150.9 1345,161.6 1355.6,172.3"/><line x1="1346" y1="160.3" x2="1366" y2="160.3"/><line x1="1346" y1="163" x2="1366" y2="163"/></g>
<text x="1345.84" y="209.30" font-size="18" font-weight="400" fill="#F2F2F2" textLength="44.81" lengthAdjust="spacingAndGlyphs">Insert</text>
<polyline points="1364,223.5 1368,227.5 1372,223.5" fill="none" stroke="#e0e0e0" stroke-width="1.5"/>
<g fill="none" stroke="#dcdcdc" stroke-width="1.4"><rect x="1413.5" y="145.8" width="41.00" height="32.40"/>
<line x1="1427.2" y1="145.8" x2="1427.2" y2="178.2"/>
<line x1="1440.8" y1="145.8" x2="1440.8" y2="178.2"/>
<line x1="1413.5" y1="156.4" x2="1454.5" y2="156.4"/>
<line x1="1413.5" y1="167.5" x2="1454.5" y2="167.5"/>
</g>
<path d="M1418.7,156 L1440,156 L1445,162 L1440,168 L1418.7,168 Z" fill="#1C6FCC" stroke="#5CB2F2" stroke-width="1.2"/><line x1="1431" y1="156.5" x2="1431" y2="167.5" stroke="#5CB2F2" stroke-width="1.2"/>
<g stroke="#E0504A" stroke-width="1.8"><line x1="1440.5" y1="154" x2="1456.5" y2="171.5"/><line x1="1456.5" y1="154" x2="1440.5" y2="171.5"/></g>
<text x="1407.51" y="209.30" font-size="18" font-weight="400" fill="#F2F2F2" textLength="52.27" lengthAdjust="spacingAndGlyphs">Delete</text>
<polyline points="1429,223.5 1433,227.5 1437,223.5" fill="none" stroke="#e0e0e0" stroke-width="1.5"/>
<g fill="none" stroke="#dcdcdc" stroke-width="1.4"><rect x="1479.5" y="145.8" width="40.80" height="32.40"/>
<line x1="1490.3" y1="145.8" x2="1490.3" y2="178.2"/>
<line x1="1509.9" y1="145.8" x2="1509.9" y2="178.2"/>
<line x1="1479.5" y1="156.4" x2="1520.3" y2="156.4"/>
<line x1="1479.5" y1="167.5" x2="1520.3" y2="167.5"/>
</g>
<rect x="1489.5" y="156.4" width="21" height="11.1" fill="#1C6FCC" stroke="#5CB2F2" stroke-width="1.2"/><g stroke="#4BA3E3" stroke-width="1.5"><line x1="1488.5" y1="140.2" x2="1511.5" y2="140.2"/><line x1="1488.5" y1="137.5" x2="1488.5" y2="143"/><line x1="1511.5" y1="137.5" x2="1511.5" y2="143"/></g>
<text x="1471.07" y="207.70" font-size="18" font-weight="400" fill="#F2F2F2" textLength="58.56" lengthAdjust="spacingAndGlyphs">Format</text>
<polyline points="1495,222 1499,226 1503,222" fill="none" stroke="#e0e0e0" stroke-width="1.5"/>
<polyline points="1584,142 1566,142 1575,152 1566,162 1584,162" fill="none" stroke="#d8d8d8" stroke-width="1.6"/>
<text x="1593.36" y="159.00" font-size="18" font-weight="400" fill="#F2F2F2" textLength="73.83" lengthAdjust="spacingAndGlyphs">AutoSum</text>
<polyline points="1695,150 1699,154 1703,150" fill="none" stroke="#e0e0e0" stroke-width="1.5"/>
<rect x="1563" y="181" width="23.5" height="20" fill="none" stroke="#d0d0d0" stroke-width="1.4"/><line x1="1563" y1="184" x2="1586.5" y2="184" stroke="#d0d0d0" stroke-width="1.2"/><g stroke="#4BA3E3" stroke-width="1.6" fill="none"><line x1="1574.7" y1="187" x2="1574.7" y2="198"/><polyline points="1571,194 1574.7,198 1578.4,194"/></g>
<text x="1591.89" y="197.30" font-size="18" font-weight="400" fill="#F2F2F2" textLength="23.34" lengthAdjust="spacingAndGlyphs">Fill</text>
<polyline points="1620,187 1624,191 1628,187" fill="none" stroke="#e0e0e0" stroke-width="1.5"/>
<path d="M1563,230 L1574,219 L1587,230 L1576,241 Z" fill="#B43DB9"/><path d="M1569,224 L1574,219 L1587,230 L1582,235 Z" fill="none" stroke="#d8d8d8" stroke-width="1.3"/>
<text x="1592.57" y="236.00" font-size="18" font-weight="400" fill="#F2F2F2" textLength="39.67" lengthAdjust="spacingAndGlyphs">Clear</text>
<polyline points="1638,226 1642,230 1646,226" fill="none" stroke="#e0e0e0" stroke-width="1.5"/>
<text x="1730.85" y="160.90" font-size="27" font-weight="400" fill="#4BA3E3" textLength="13.69" lengthAdjust="spacingAndGlyphs">A</text>
<text x="1729.67" y="181.40" font-size="26" font-weight="400" fill="#d8d8d8" textLength="15.62" lengthAdjust="spacingAndGlyphs">Z</text>
<path d="M1748,151.5 L1772,151.5 L1763,163 L1763,175 L1757,175 L1757,163 Z" fill="none" stroke="#d8d8d8" stroke-width="1.5" stroke-linejoin="round"/>
<text x="1724.14" y="207.50" font-size="18" font-weight="400" fill="#F2F2F2" textLength="52.92" lengthAdjust="spacingAndGlyphs">Sort &amp;</text>
<text x="1723.52" y="231.80" font-size="18" font-weight="400" fill="#F2F2F2" textLength="39.74" lengthAdjust="spacingAndGlyphs">Filter</text>
<polyline points="1767.8,222.5 1771.8,226.5 1775.8,222.5" fill="none" stroke="#e0e0e0" stroke-width="1.5"/>
<g fill="none" stroke="#d8d8d8" stroke-width="1.7"><circle cx="1826" cy="157.6" r="15.2"/><line x1="1815" y1="168.5" x2="1798.5" y2="184.5"/></g>
<text x="1793.43" y="207.50" font-size="18" font-weight="400" fill="#F2F2F2" textLength="54.85" lengthAdjust="spacingAndGlyphs">Find &amp;</text>
<text x="1789.24" y="231.80" font-size="18" font-weight="400" fill="#F2F2F2" textLength="46.87" lengthAdjust="spacingAndGlyphs">Select</text>
<polyline points="1841.7,222.5 1845.7,226.5 1849.7,222.5" fill="none" stroke="#e0e0e0" stroke-width="1.5"/>
<g fill="none" stroke="#C5532E" stroke-width="2.6"><rect x="1896" y="142" width="40" height="40"/><rect x="1901.5" y="147.5" width="11.5" height="11.5"/><rect x="1919" y="147.5" width="11.5" height="11.5"/><rect x="1901.5" y="165" width="11.5" height="11.5"/><rect x="1919" y="165" width="11.5" height="11.5"/></g>
<text x="1884.95" y="207.50" font-size="18" font-weight="400" fill="#F2F2F2" textLength="62.50" lengthAdjust="spacingAndGlyphs">Add-ins</text>
<g fill="none" stroke="#d0d0d0" stroke-width="1.3"><rect x="1989" y="141.5" width="41.5" height="41"/>
<line x1="1989" y1="151.8" x2="2030.5" y2="151.8"/>
<line x1="1989" y1="162.0" x2="2030.5" y2="162.0"/>
<line x1="1989" y1="172.2" x2="2030.5" y2="172.2"/>
<line x1="2002.8" y1="141.5" x2="2002.8" y2="182.5"/>
<line x1="2016.7" y1="141.5" x2="2016.7" y2="182.5"/>
</g>
<g><circle cx="2008" cy="159" r="11.5" fill="#292929" stroke="#d8d8d8" stroke-width="1.6"/><rect x="2002" y="156" width="3" height="8" fill="#9a9a9a"/><rect x="2006" y="152" width="3" height="12" fill="#d8d8d8"/><rect x="2010" y="154" width="3" height="10" fill="#4BA3E3"/><line x1="2016" y1="167" x2="2028" y2="180" stroke="#d8d8d8" stroke-width="1.6"/></g>
<text x="1979.76" y="207.50" font-size="18" font-weight="400" fill="#F2F2F2" textLength="61.99" lengthAdjust="spacingAndGlyphs">Analyze</text>
<text x="1990.51" y="231.80" font-size="18" font-weight="400" fill="#F2F2F2" textLength="38.09" lengthAdjust="spacingAndGlyphs">Data</text>
<circle cx="2212.3" cy="199.3" r="56" fill="#ffffff"/>
<rect x="2181.8" y="173.6" width="61" height="52.1" fill="#5A5FE3"/>
<rect x="2189" y="181" width="20.5" height="15.5" fill="#ffffff"/>
<rect x="2215" y="181" width="20.5" height="15.5" fill="#ffffff"/>
<rect x="2189" y="203" width="20.5" height="15.5" fill="#ffffff"/>
<rect x="2215" y="203" width="20.5" height="15.5" fill="#ffffff"/>
<text x="2292.70" y="197.60" font-size="50" font-weight="700" fill="#ffffff" textLength="119.55" lengthAdjust="spacingAndGlyphs" stroke="#fff" stroke-width="2">FINM</text>
<text x="2452.64" y="197.60" font-size="50" font-weight="700" fill="#ffffff" textLength="200.26" lengthAdjust="spacingAndGlyphs" stroke="#fff" stroke-width="2">DELSLAB</text>
<circle cx="2431.8" cy="180" r="13.9" fill="none" stroke="#fff" stroke-width="8"/>
<rect x="2428" y="155.4" width="7.8" height="26" rx="3.9" fill="#fff" stroke="#292929" stroke-width="3"/>
<text x="2294.53" y="237.40" font-size="36" font-weight="400" fill="#ffffff" textLength="23.68" lengthAdjust="spacingAndGlyphs" stroke="#fff" stroke-width="0.6">T</text>
<text x="2336.78" y="237.40" font-size="36" font-weight="400" fill="#ffffff" textLength="21.18" lengthAdjust="spacingAndGlyphs" stroke="#fff" stroke-width="0.6">e</text>
<text x="2379.74" y="237.40" font-size="36" font-weight="400" fill="#ffffff" textLength="35.34" lengthAdjust="spacingAndGlyphs" stroke="#fff" stroke-width="0.6">m</text>
<text x="2436.17" y="237.40" font-size="36" font-weight="400" fill="#ffffff" textLength="22.49" lengthAdjust="spacingAndGlyphs" stroke="#fff" stroke-width="0.6">p</text>
<text x="2481.15" y="237.40" font-size="36" font-weight="400" fill="#ffffff" textLength="8.38" lengthAdjust="spacingAndGlyphs" stroke="#fff" stroke-width="0.6">l</text>
<text x="2510.30" y="237.40" font-size="36" font-weight="400" fill="#ffffff" textLength="19.66" lengthAdjust="spacingAndGlyphs" stroke="#fff" stroke-width="0.6">a</text>
<text x="2555.41" y="237.40" font-size="36" font-weight="400" fill="#ffffff" textLength="10.90" lengthAdjust="spacingAndGlyphs" stroke="#fff" stroke-width="0.6">t</text>
<text x="2590.88" y="237.40" font-size="36" font-weight="400" fill="#ffffff" textLength="21.18" lengthAdjust="spacingAndGlyphs" stroke="#fff" stroke-width="0.6">e</text>
<text x="2633.68" y="237.40" font-size="36" font-weight="400" fill="#ffffff" textLength="18.63" lengthAdjust="spacingAndGlyphs" stroke="#fff" stroke-width="0.6">s</text>
<polyline points="2851,254 2857,260 2863,254" fill="none" stroke="#e0e0e0" stroke-width="1.6"/>
</svg>
</body></html>
